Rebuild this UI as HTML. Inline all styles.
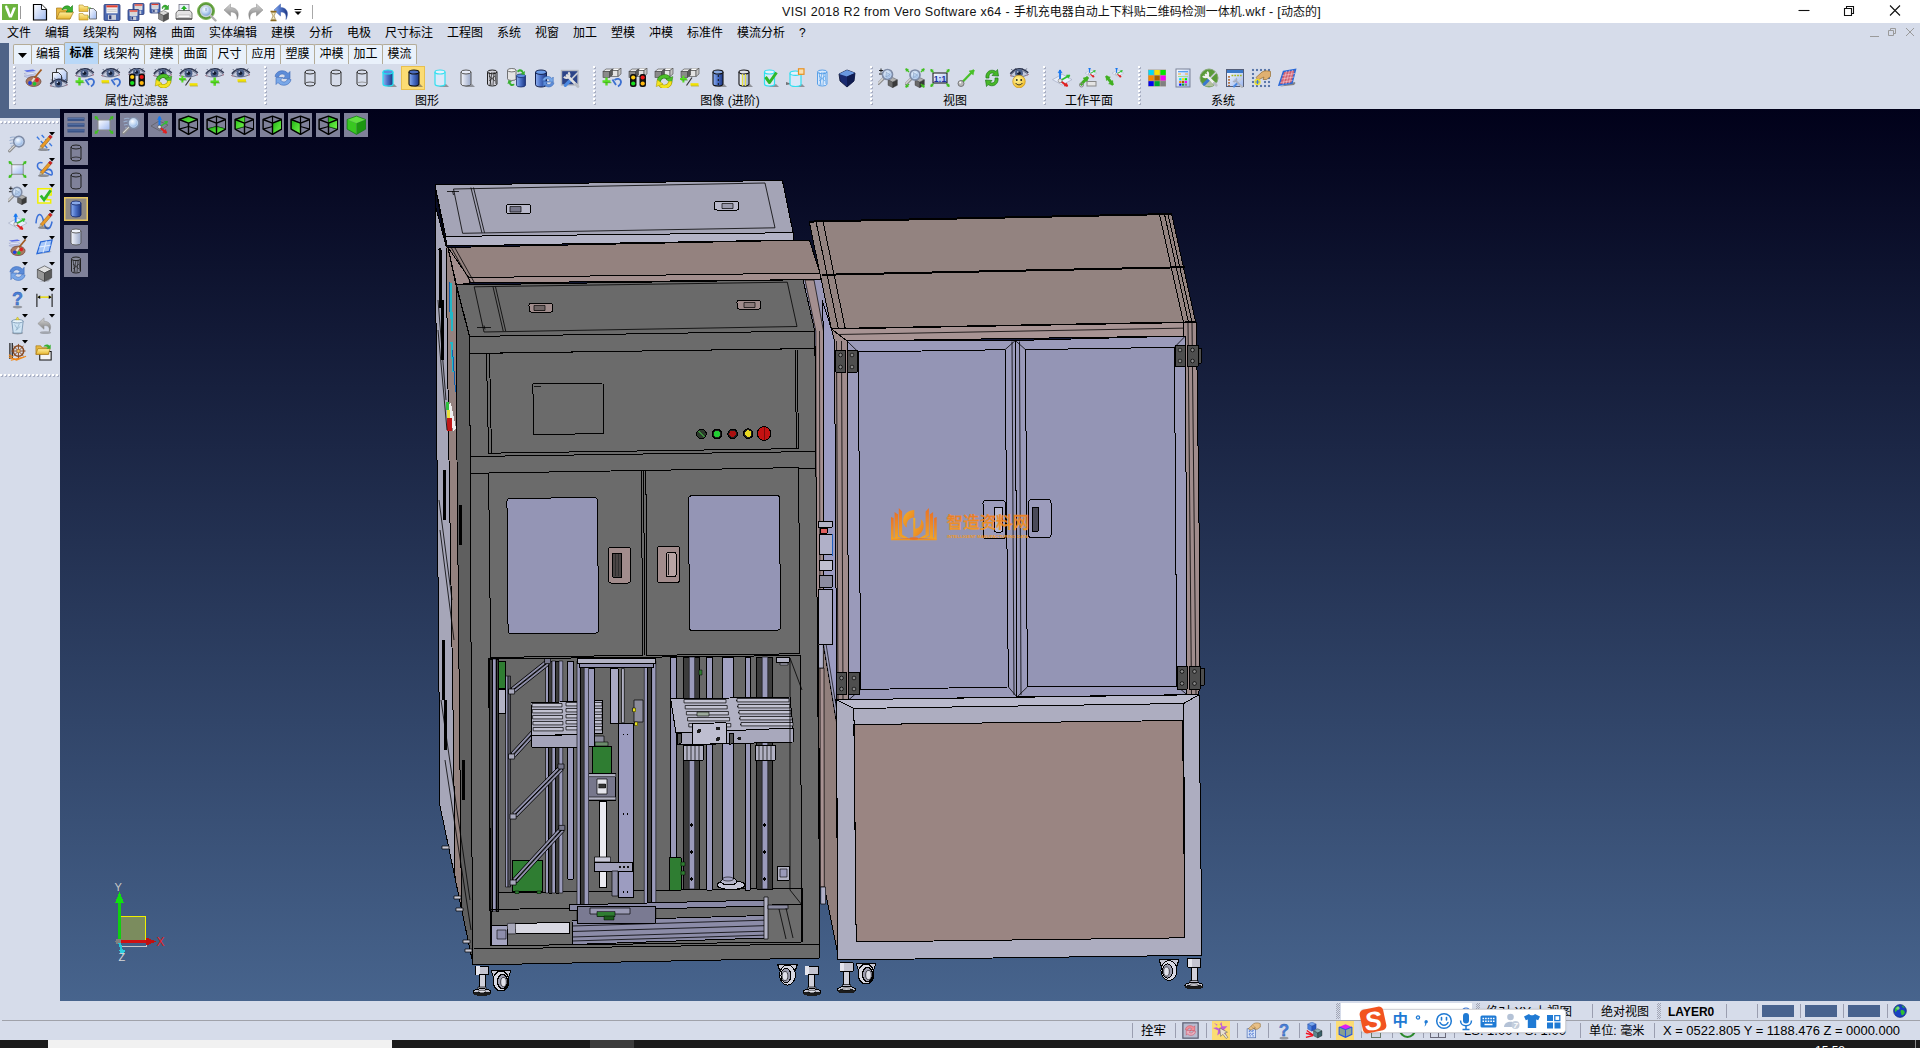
<!DOCTYPE html>
<html lang="zh-CN"><head><meta charset="utf-8"><title>VISI 2018 R2</title>
<style>
*{box-sizing:border-box;margin:0;padding:0}
html,body{width:1920px;height:1048px;overflow:hidden;background:#d6dcea}
body{position:relative;font-family:"Liberation Sans","Noto Sans CJK SC",sans-serif;font-size:12px;color:#000}
.abs{position:absolute}
#title{left:0;top:0;width:1920px;height:23px;background:#fff}
#title .t{position:absolute;left:782px;top:4px;height:16px;line-height:16px;font-size:12px;white-space:nowrap;color:#111}
#title .la{font-size:12.5px;letter-spacing:.32px}
#menu{left:0;top:23px;width:1920px;height:21px;background:#d6dcea}
#menu span{position:absolute;top:2px;height:16px;line-height:16px;font-size:12px;white-space:nowrap}
#tabs{left:0;top:43px;width:1920px;height:22px}
.tab{position:absolute;top:1px;height:21px;background:#e9f1fb;border:1px solid #b4ac98;border-bottom:none;border-radius:2px 2px 0 0;font-size:12px;line-height:18px;text-align:center;white-space:nowrap}
.tab.on{top:-1px;height:23px;background:#b9d8f8;font-weight:bold;line-height:20px}
#tb{left:9px;top:64px;width:1911px;height:45px;background:#d6dcea}
.lab{position:absolute;top:94px;height:14px;line-height:14px;font-size:12px;white-space:nowrap;transform:translateX(-50%)}
.grip{position:absolute;width:3px;background-image:linear-gradient(#fff,#fff),linear-gradient(#aab0c4,#aab0c4);background-size:2px 2px,2px 2px;background-position:0 0,1px 1px;background-repeat:repeat-y;background-size:2px 2px;}
.grip{background:none}.grip::before{content:'';position:absolute;left:1px;top:1px;width:2px;height:100%;background-image:repeating-linear-gradient(#a9afc3 0,#a9afc3 2px,transparent 2px,transparent 4px)}.grip::after{content:'';position:absolute;left:0;top:0;width:2px;height:100%;background-image:repeating-linear-gradient(#fff 0,#fff 2px,transparent 2px,transparent 4px)}
.hgrip{position:absolute;height:3px}.hgrip::before{content:'';position:absolute;left:1px;top:1px;height:2px;width:100%;background-image:repeating-linear-gradient(90deg,#a9afc3 0,#a9afc3 2px,transparent 2px,transparent 4px)}.hgrip::after{content:'';position:absolute;left:0;top:0;height:2px;width:100%;background-image:repeating-linear-gradient(90deg,#fff 0,#fff 2px,transparent 2px,transparent 4px)}
.ic{position:absolute;width:20px;height:20px}
#vp{left:60px;top:109px;width:1860px;height:892px;background:linear-gradient(#01011a 0%,#47648d 100%);overflow:hidden}
.vb{position:absolute;width:24px;height:24px;background:#7f8199}
#st{left:0;top:1001px;width:1920px;height:39px;background:#d6dcea}
#st span{position:absolute;white-space:nowrap;font-size:12.5px;line-height:16px}
#task{left:0;top:1040px;width:1920px;height:8px;background:#1b1b1b}
</style></head><body>
<div id="title" class="abs"><span class="t"><span id="t1" class="la">VISI 2018 R2 from Vero Software x64 - </span>手机充电器自动上下料贴二维码检测一体机<span class="la">.wkf - [</span>动态的<span class="la">]</span></span>
<svg class="abs" style="left:1780px;top:0" width="140" height="23" viewBox="0 0 140 23"><g stroke="#111" stroke-width="1.1" fill="none"><path d="M18.5 10.5h11"/><path d="M64.5 8.500h7v7h-7zM66.500 8.500v-2h7v7h-2"/><path d="M110 5.500l10 10M120 5.500l-10 10"/></g></svg>
</div>
<div id="menu" class="abs">
<span style="left:7px">文件</span><span style="left:45px">编辑</span><span style="left:83px">线架构</span><span style="left:133px">网格</span><span style="left:171px">曲面</span><span style="left:209px">实体编辑</span><span style="left:271px">建模</span><span style="left:309px">分析</span><span style="left:347px">电极</span><span style="left:385px">尺寸标注</span><span style="left:447px">工程图</span><span style="left:497px">系统</span><span style="left:535px">视窗</span><span style="left:573px">加工</span><span style="left:611px">塑模</span><span style="left:649px">冲模</span><span style="left:687px">标准件</span><span style="left:737px">模流分析</span><span style="left:799px">?</span>
<svg class="abs" style="left:1865px;top:2px" width="55" height="16" viewBox="0 0 55 16"><g stroke="#9a9a9a" stroke-width="1" fill="none"><path d="M5 11.500h9"/><path d="M23.500 5.500h5v5h-5zM25.500 5.500v-2h5v5h-2"/><path d="M41 3l8 8M49 3l-8 8"/></g></svg>
</div>
<div class="abs" style="left:0;top:43px;width:9px;height:66px;background:#4f6387"></div>
<div class="abs" style="left:0;top:109px;width:60px;height:9px;background:#4f6387"></div>
<div id="tabs" class="abs">
<div class="tab" style="left:13px;width:19px"><svg width="9" height="5" viewBox="0 0 9 5" style="position:absolute;left:4px;top:8px"><path d="M0 0h9L4.500 5z" fill="#000"/></svg></div>
<div class="tab" style="left:31px;width:34px">编辑</div>
<div class="tab on" style="left:64px;width:35px">标准</div>
<div class="tab" style="left:98px;width:47px">线架构</div>
<div class="tab" style="left:144px;width:35px">建模</div>
<div class="tab" style="left:178px;width:35px">曲面</div>
<div class="tab" style="left:212px;width:35px">尺寸</div>
<div class="tab" style="left:246px;width:35px">应用</div>
<div class="tab" style="left:280px;width:35px">塑膜</div>
<div class="tab" style="left:314px;width:35px">冲模</div>
<div class="tab" style="left:348px;width:35px">加工</div>
<div class="tab" style="left:382px;width:35px">模流</div>
</div>
<svg width="0" height="0" style="position:absolute;left:0;top:0"><defs><linearGradient id="gB" x1="0" x2="1"><stop offset="0" stop-color="#8fb0f0"/><stop offset=".45" stop-color="#4c72c8"/><stop offset="1" stop-color="#1c3580"/></linearGradient><linearGradient id="gW" x1="0" x2="1"><stop offset="0" stop-color="#f4f6fc"/><stop offset="1" stop-color="#9aa8c8"/></linearGradient><linearGradient id="gP" x1="0" y1="0" x2="1" y2="1"><stop offset="0" stop-color="#fff"/><stop offset="1" stop-color="#9db8f0"/></linearGradient><linearGradient id="gF" x1="0" y1="0" x2="0" y2="1"><stop offset="0" stop-color="#fff0a0"/><stop offset="1" stop-color="#e8b830"/></linearGradient><linearGradient id="gG" x1="0" y1="0" x2="0" y2="1"><stop offset="0" stop-color="#d8d8d8"/><stop offset="1" stop-color="#707070"/></linearGradient><radialGradient id="gL" cx=".4" cy=".35" r=".7"><stop offset="0" stop-color="#fafcff"/><stop offset=".45" stop-color="#c2d8f4"/><stop offset="1" stop-color="#6c96d2"/></radialGradient><radialGradient id="gY" cx=".4" cy=".35" r=".7"><stop offset="0" stop-color="#fff8a0"/><stop offset="1" stop-color="#f0b820"/></radialGradient><linearGradient id="gGr" x1="0" y1="0" x2="1" y2="1"><stop offset="0" stop-color="#1ca812"/><stop offset=".5" stop-color="#4ad830"/><stop offset="1" stop-color="#7cf050"/></linearGradient></defs></svg>
<svg class="ic" style="left:0px;top:1.5px;width:20px;height:20px" viewBox="0 0 20 20" ><rect x="2" y="2" width="16" height="16" fill="#6cb33e"/><path d="M5,5.500h3.200l2.300,7l2.600,-7h2.900l-4.200,10h-2.800z" fill="#fff"/><circle cx="6.300" cy="4.800" r="1.200" fill="#fff"/></svg>
<svg class="ic" style="left:30px;top:1.5px;width:20px;height:20px" viewBox="0 0 20 20" ><path d="M3.500,2.500h8l5,5v10.500h-13z" fill="url(#gP)" stroke="#000" stroke-width="1.200"/><path d="M11.500,2.500v5h5" fill="#fff" stroke="#000" stroke-width=".9"/></svg>
<svg class="ic" style="left:54.5px;top:1.5px;width:20px;height:20px" viewBox="0 0 20 20" ><path d="M1.500,6h5l1.500,2h7v9h-13.500z" fill="#e8b840" stroke="#a87818" stroke-width=".7"/><path d="M1.500,17l3,-7h14l-3.500,7z" fill="url(#gF)" stroke="#a87818" stroke-width=".7"/><path d="M7,8c1,-5 7,-5 8.500,-2.500l2,-2v6.500h-6.500l2,-2c-1.500,-2 -4,-1.500 -6,0z" fill="#38b030" stroke="#1c7a18" stroke-width=".6"/></svg>
<svg class="ic" style="left:78px;top:1.5px;width:20px;height:20px" viewBox="0 0 20 20" ><path d="M1,3h4l1,1.500h4v5h-9z" fill="url(#gF)" stroke="#b08820" stroke-width=".6"/><path d="M1,11.500h4l1,1.500h4v5h-9z" fill="url(#gF)" stroke="#b08820" stroke-width=".6"/><path d="M10,6h3M10,15h3M13,6v9" stroke="#58c838" stroke-width="1" fill="none"/><path d="M11.500,6.500h4l3,3v7.500h-7z" fill="url(#gP)" stroke="#555" stroke-width=".8"/></svg>
<svg class="ic" style="left:101.5px;top:1.5px;width:20px;height:20px" viewBox="0 0 20 20" ><rect x="2" y="2.5" width="16" height="16" rx="1" fill="#4a68b0" stroke="#2a3a78" stroke-width=".8"/><rect x="4.4" y="3.3" width="11.2" height="8.0" fill="#f4f4f4"/><rect x="4.4" y="3.3" width="11.2" height="2.08" fill="#e04030"/><path d="M5.2,7.3h9.6M5.2,9.219999999999999h9.6" stroke="#999" stroke-width=".5"/><rect x="6.0" y="12.74" width="8.0" height="5.12" fill="#c8ccd8"/><rect x="7.12" y="13.38" width="2.24" height="3.84" fill="#2a3a78"/></svg>
<svg class="ic" style="left:125.5px;top:1.5px;width:20px;height:20px" viewBox="0 0 20 20" ><rect x="7" y="1.5" width="11" height="11" rx="1" fill="#4a68b0" stroke="#2a3a78" stroke-width=".8"/><rect x="8.65" y="2.3" width="7.699999999999999" height="5.5" fill="#f4f4f4"/><rect x="8.65" y="2.3" width="7.699999999999999" height="1.4300000000000002" fill="#e04030"/><path d="M9.2,4.8h6.6M9.2,6.12h6.6" stroke="#999" stroke-width=".5"/><rect x="9.75" y="8.54" width="5.5" height="3.52" fill="#c8ccd8"/><rect x="10.52" y="8.98" width="1.54" height="2.6399999999999997" fill="#2a3a78"/><rect x="2" y="7.5" width="11" height="11" rx="1" fill="#4a68b0" stroke="#2a3a78" stroke-width=".8"/><rect x="3.65" y="8.3" width="7.699999999999999" height="5.5" fill="#f4f4f4"/><rect x="3.65" y="8.3" width="7.699999999999999" height="1.4300000000000002" fill="#e04030"/><path d="M4.2,10.8h6.6M4.2,12.120000000000001h6.6" stroke="#999" stroke-width=".5"/><rect x="4.75" y="14.54" width="5.5" height="3.52" fill="#c8ccd8"/><rect x="5.52" y="14.98" width="1.54" height="2.6399999999999997" fill="#2a3a78"/></svg>
<svg class="ic" style="left:149px;top:1.5px;width:20px;height:20px" viewBox="0 0 20 20" ><rect x="1" y="1" width="10" height="10" rx="1" fill="#4a68b0" stroke="#2a3a78" stroke-width=".8"/><rect x="2.5" y="1.8" width="7.0" height="5.0" fill="#f4f4f4"/><rect x="2.5" y="1.8" width="7.0" height="1.3" fill="#e04030"/><path d="M3.0,4.0h6.0M3.0,5.2h6.0" stroke="#999" stroke-width=".5"/><rect x="3.5" y="7.4" width="5.0" height="3.2" fill="#c8ccd8"/><rect x="4.2" y="7.800000000000001" width="1.4000000000000001" height="2.4" fill="#2a3a78"/><g transform="translate(9.5,8.5) scale(0.85)" stroke="#333" stroke-width=".5" stroke-linejoin="round"><path d="M0,3l6,-3l6,3l-6,3z" fill="#d8d8d8"/><path d="M0,3l6,3v7l-6,-3z" fill="#888"/><path d="M12,3l-6,3v7l6,-3z" fill="#555"/></g><path d="M13,6.500c0,-3.500 4,-4.500 5.500,-2l1,-1.500v4.500h-4.500l1.500,-1.500c-1,-1.500 -2.500,-1 -2.500,.5z" fill="#38b030" stroke="#1c7a18" stroke-width=".4"/></svg>
<svg class="ic" style="left:174px;top:1.5px;width:20px;height:20px" viewBox="0 0 20 20" ><rect x="5" y="2.500" width="10" height="8" fill="#eaf0fc" stroke="#667" stroke-width=".7"/><path d="M10,3.500l3,3.500h-2v2.500h-2v-2.500h-2z" fill="#28b028"/><path d="M2,11l2,-2.500h12l2,2.500v6h-16z" fill="#e4e4e4" stroke="#555" stroke-width=".8"/><rect x="4" y="13" width="12" height="2.500" fill="#fafafa" stroke="#888" stroke-width=".4"/><path d="M2,17h16" stroke="#444" stroke-width="1.200"/></svg>
<svg class="ic" style="left:197px;top:1.5px;width:20px;height:20px" viewBox="0 0 20 20" ><circle cx="9" cy="9" r="8.500" fill="#5a9838"/><circle cx="9" cy="9" r="8.500" fill="none" stroke="#7fb858" stroke-width="1"/><path d="M13,13l5.500,5.500" stroke="#b0b0b0" stroke-width="2.400" stroke-linecap="round"/><circle cx="9" cy="9" r="5.500" fill="url(#gL)" stroke="#c8d0d8" stroke-width="1.400"/><path d="M9,6v3" stroke="#6a8ab8" stroke-width=".8"/></svg>
<svg class="ic" style="left:221.5px;top:1.5px;width:20px;height:20px" viewBox="0 0 20 20" ><path d="M2,8l6.500,-6v3.500c7,0 9.500,6 6.500,12c0.500,-5 -1.500,-7.500 -6.500,-7.500v4z" fill="url(#gG)" stroke="#8a8a8a" stroke-width=".5"/></svg>
<svg class="ic" style="left:244.5px;top:1.5px;width:20px;height:20px" viewBox="0 0 20 20" ><path d="M18,8l-6.500,-6v3.500c-7,0 -9.500,6 -6.500,12c-0.500,-5 1.500,-7.500 6.500,-7.500v4z" fill="url(#gG)" stroke="#8a8a8a" stroke-width=".5"/></svg>
<svg class="ic" style="left:268.5px;top:1.5px;width:20px;height:20px" viewBox="0 0 20 20" ><path d="M5,8l6.500,-6v3.500c7,0 8.500,6 5.500,12c0.500,-5 -0.500,-7.500 -5.500,-7.500v4z" fill="url(#gB)" stroke="#3a5aa8" stroke-width=".5"/><path d="M1.500,9.500h6M1.500,18.500h6" stroke="#8a6a20" stroke-width="1.400"/><path d="M2.500,10.500h4l-1.500,3.500l1.500,3.500h-4l1.500,-3.500z" fill="#f0e8c0" stroke="#8a6a20" stroke-width=".6"/></svg>
<div class="abs" style="left:20px;top:6px;width:1px;height:13px;background:#9a9a9a"></div>
<svg class="abs" style="left:294px;top:8px" width="8" height="8" viewBox="0 0 8 8"><path d="M.5,1.500h7" stroke="#000" stroke-width="1"/><path d="M.5,3.500h7l-3.500,3.500z" fill="#000"/></svg>
<div class="abs" style="left:312px;top:5px;width:1px;height:14px;background:#a8a8a8"></div>
<div id="tb" class="abs"></div>
<svg class="ic" style="left:23px;top:68px;width:20px;height:20px" viewBox="0 0 20 20" ><path d="M1,2.500l9,-1l3,1.500l-9,1z" fill="#5a6ee8"/><path d="M1,5.500l9,-1l3,1.500l-9,1z" fill="#e8ecff" stroke="#8890c0" stroke-width=".4"/><path d="M1,8l9,-1l3,1.500l-9,1z" fill="#c8d0f0" stroke="#8890c0" stroke-width=".4"/><ellipse cx="10.500" cy="13.500" rx="7.500" ry="5" fill="#a87860" stroke="#6a4030" stroke-width=".7"/><circle cx="7" cy="15" r="1.900" fill="#2040e0"/><circle cx="11.500" cy="15.800" r="1.900" fill="#20c030"/><circle cx="14" cy="12" r="1.900" fill="#e02020"/><path d="M18.500,1.500l-7.500,9" stroke="#a05a20" stroke-width="1.800"/><path d="M11.500,10l-2.500,3.500" stroke="#e8e0d0" stroke-width="2"/></svg>
<svg class="ic" style="left:49px;top:68px;width:20px;height:20px" viewBox="0 0 20 20" ><path d="M7.500,.8h7l3.500,3.500v9h-10.500z" fill="url(#gP)" stroke="#222" stroke-width=".9"/><path d="M3.500,4.500h6l3,3v7h-9z" fill="url(#gP)" stroke="#222" stroke-width=".9"/><g transform="translate(0.5,10.5) scale(0.95)"><path d="M0.500,7.500Q9,-2.500 19,6.500Q10,11 0.500,7.500z" fill="#c4cadc" stroke="#59607a" stroke-width=".8"/><path d="M0.500,7.500l2,.8M19,6.500l-2,1" stroke="#c08898" stroke-width="1"/><path d="M0.800,5.800Q9,-3.800 18.800,4.800" fill="none" stroke="#2e3650" stroke-width="1.500"/><path d="M3,2.500l-1.200,-1.500M6,.8l-.6,-1.500M13,.5l.6,-1.500M16,2l1.200,-1.500" stroke="#2e3650" stroke-width=".7"/><circle cx="9.500" cy="5.200" r="3.900" fill="#4a5f88"/><circle cx="9.500" cy="5.200" r="1.800" fill="#141c30"/><circle cx="8.300" cy="4" r=".8" fill="#dfe8ff"/></g></svg>
<svg class="ic" style="left:75px;top:68px;width:20px;height:20px" viewBox="0 0 20 20" ><g transform="translate(0,0) scale(1)"><path d="M0.500,7.500Q9,-2.500 19,6.500Q10,11 0.500,7.500z" fill="#c4cadc" stroke="#59607a" stroke-width=".8"/><path d="M0.500,7.500l2,.8M19,6.500l-2,1" stroke="#c08898" stroke-width="1"/><path d="M0.800,5.800Q9,-3.800 18.800,4.800" fill="none" stroke="#2e3650" stroke-width="1.500"/><path d="M3,2.500l-1.200,-1.500M6,.8l-.6,-1.500M13,.5l.6,-1.500M16,2l1.200,-1.500" stroke="#2e3650" stroke-width=".7"/><circle cx="9.500" cy="5.200" r="3.900" fill="#4a5f88"/><circle cx="9.500" cy="5.200" r="1.800" fill="#141c30"/><circle cx="8.300" cy="4" r=".8" fill="#dfe8ff"/></g><path d="M0.5,13.5h8M4.5,9.5v8" stroke="#55dd22" stroke-width="2.4" fill="none"/><path d="M1.5,14.7h8" stroke="#3a8a18" stroke-width=".6" fill="none"/><path d="M10.5,11.5l3.500,5.500" stroke="#3b6fd0" stroke-width="1.800" fill="none"/><path d="M12.5,12.0c6,-4 9,3 3.500,6.500" stroke="#3b6fd0" stroke-width="1.800" fill="none"/></svg>
<svg class="ic" style="left:101px;top:68px;width:20px;height:20px" viewBox="0 0 20 20" ><g transform="translate(0,0) scale(1)"><path d="M0.500,7.500Q9,-2.500 19,6.500Q10,11 0.500,7.500z" fill="#c4cadc" stroke="#59607a" stroke-width=".8"/><path d="M0.500,7.500l2,.8M19,6.500l-2,1" stroke="#c08898" stroke-width="1"/><path d="M0.800,5.800Q9,-3.800 18.800,4.800" fill="none" stroke="#2e3650" stroke-width="1.500"/><path d="M3,2.500l-1.200,-1.500M6,.8l-.6,-1.500M13,.5l.6,-1.500M16,2l1.200,-1.500" stroke="#2e3650" stroke-width=".7"/><circle cx="9.500" cy="5.200" r="3.900" fill="#4a5f88"/><circle cx="9.500" cy="5.200" r="1.800" fill="#141c30"/><circle cx="8.300" cy="4" r=".8" fill="#dfe8ff"/></g><path d="M0.5,13.5h7.5" stroke="#f2e200" stroke-width="2.600" fill="none"/><path d="M1.0,15.0h7.5" stroke="#a89a00" stroke-width=".6" fill="none"/><path d="M10.5,11.5l3.500,5.500" stroke="#3b6fd0" stroke-width="1.800" fill="none"/><path d="M12.5,12.0c6,-4 9,3 3.500,6.500" stroke="#3b6fd0" stroke-width="1.800" fill="none"/></svg>
<svg class="ic" style="left:127px;top:68px;width:20px;height:20px" viewBox="0 0 20 20" ><g transform="translate(1,-0.5) scale(0.9)"><path d="M0.500,7.500Q9,-2.500 19,6.500Q10,11 0.500,7.500z" fill="#c4cadc" stroke="#59607a" stroke-width=".8"/><path d="M0.500,7.500l2,.8M19,6.500l-2,1" stroke="#c08898" stroke-width="1"/><path d="M0.800,5.800Q9,-3.800 18.800,4.800" fill="none" stroke="#2e3650" stroke-width="1.500"/><path d="M3,2.500l-1.200,-1.500M6,.8l-.6,-1.500M13,.5l.6,-1.500M16,2l1.200,-1.500" stroke="#2e3650" stroke-width=".7"/><circle cx="9.500" cy="5.200" r="3.900" fill="#4a5f88"/><circle cx="9.500" cy="5.200" r="1.800" fill="#141c30"/><circle cx="8.300" cy="4" r=".8" fill="#dfe8ff"/></g><rect x="2" y="5.5" width="6.500" height="13" rx="2.500" fill="#111"/><rect x="11.5" y="5.5" width="6.500" height="13" rx="2.500" fill="#111"/><circle cx="5.2" cy="9.0" r="2.100" fill="#ffcc10"/><circle cx="5.2" cy="15.0" r="2.100" fill="#18e020"/><circle cx="14.7" cy="9.0" r="2.100" fill="#f01818"/><circle cx="14.7" cy="15.0" r="2.100" fill="#ffb810"/></svg>
<svg class="ic" style="left:153px;top:68px;width:20px;height:20px" viewBox="0 0 20 20" ><g transform="translate(0,0) scale(1)"><path d="M0.500,7.500Q9,-2.500 19,6.500Q10,11 0.500,7.500z" fill="#c4cadc" stroke="#59607a" stroke-width=".8"/><path d="M0.500,7.500l2,.8M19,6.500l-2,1" stroke="#c08898" stroke-width="1"/><path d="M0.800,5.800Q9,-3.800 18.800,4.800" fill="none" stroke="#2e3650" stroke-width="1.500"/><path d="M3,2.500l-1.200,-1.500M6,.8l-.6,-1.500M13,.5l.6,-1.500M16,2l1.200,-1.500" stroke="#2e3650" stroke-width=".7"/><circle cx="9.500" cy="5.200" r="3.900" fill="#4a5f88"/><circle cx="9.500" cy="5.200" r="1.800" fill="#141c30"/><circle cx="8.300" cy="4" r=".8" fill="#dfe8ff"/></g><g transform="translate(2.5,6) scale(1.05)" fill="none"><path d="M2.200,7A5.300,5 0 0 1 12,4.200" stroke="#2c7a14" stroke-width="3.800"/><path d="M2.200,7A5.300,5 0 0 1 12,4.200" stroke="#4cc028" stroke-width="2.800"/><path d="M9,4.500l6.500,-2.500l-1,6.500z" fill="#4cc028" stroke="#2c7a14" stroke-width=".5"/><path d="M13,6.500A5.300,5 0 0 1 3.200,9.300" stroke="#a89800" stroke-width="3.800"/><path d="M13,6.500A5.300,5 0 0 1 3.200,9.300" stroke="#f4e420" stroke-width="2.800"/><path d="M6.200,9l-6.500,2.500l1,-6.500z" fill="#f4e420" stroke="#a89800" stroke-width=".5"/></g></svg>
<svg class="ic" style="left:179px;top:68px;width:20px;height:20px" viewBox="0 0 20 20" ><g transform="translate(0,0) scale(1)"><path d="M0.500,7.500Q9,-2.500 19,6.500Q10,11 0.500,7.500z" fill="#c4cadc" stroke="#59607a" stroke-width=".8"/><path d="M0.500,7.500l2,.8M19,6.500l-2,1" stroke="#c08898" stroke-width="1"/><path d="M0.800,5.800Q9,-3.800 18.800,4.800" fill="none" stroke="#2e3650" stroke-width="1.500"/><path d="M3,2.500l-1.200,-1.500M6,.8l-.6,-1.500M13,.5l.6,-1.500M16,2l1.200,-1.500" stroke="#2e3650" stroke-width=".7"/><circle cx="9.500" cy="5.200" r="3.900" fill="#4a5f88"/><circle cx="9.500" cy="5.200" r="1.800" fill="#141c30"/><circle cx="8.300" cy="4" r=".8" fill="#dfe8ff"/></g><path d="M0,11.05h6.8M3.4,7.65v6.8" stroke="#55dd22" stroke-width="2.04" fill="none"/><path d="M1,12.07h6.8" stroke="#3a8a18" stroke-width=".6" fill="none"/><path d="M12,9.500l-5.500,8" stroke="#333" stroke-width="1.100"/><path d="M10.5,16.5h8" stroke="#f2e200" stroke-width="2.600" fill="none"/><path d="M11.0,18.0h8" stroke="#a89a00" stroke-width=".6" fill="none"/></svg>
<svg class="ic" style="left:205px;top:68px;width:20px;height:20px" viewBox="0 0 20 20" ><g transform="translate(0,0) scale(1)"><path d="M0.500,7.500Q9,-2.500 19,6.500Q10,11 0.500,7.500z" fill="#c4cadc" stroke="#59607a" stroke-width=".8"/><path d="M0.500,7.500l2,.8M19,6.500l-2,1" stroke="#c08898" stroke-width="1"/><path d="M0.800,5.800Q9,-3.800 18.800,4.800" fill="none" stroke="#2e3650" stroke-width="1.500"/><path d="M3,2.500l-1.200,-1.500M6,.8l-.6,-1.500M13,.5l.6,-1.500M16,2l1.200,-1.500" stroke="#2e3650" stroke-width=".7"/><circle cx="9.500" cy="5.200" r="3.900" fill="#4a5f88"/><circle cx="9.500" cy="5.200" r="1.800" fill="#141c30"/><circle cx="8.300" cy="4" r=".8" fill="#dfe8ff"/></g><path d="M5.5,13.65h8.4M9.7,9.45v8.4" stroke="#55dd22" stroke-width="2.52" fill="none"/><path d="M6.5,14.91h8.4" stroke="#3a8a18" stroke-width=".6" fill="none"/></svg>
<svg class="ic" style="left:231px;top:68px;width:20px;height:20px" viewBox="0 0 20 20" ><g transform="translate(0,0) scale(1)"><path d="M0.500,7.500Q9,-2.500 19,6.500Q10,11 0.500,7.500z" fill="#c4cadc" stroke="#59607a" stroke-width=".8"/><path d="M0.500,7.500l2,.8M19,6.500l-2,1" stroke="#c08898" stroke-width="1"/><path d="M0.800,5.800Q9,-3.800 18.800,4.800" fill="none" stroke="#2e3650" stroke-width="1.500"/><path d="M3,2.500l-1.200,-1.500M6,.8l-.6,-1.500M13,.5l.6,-1.500M16,2l1.200,-1.500" stroke="#2e3650" stroke-width=".7"/><circle cx="9.500" cy="5.200" r="3.900" fill="#4a5f88"/><circle cx="9.500" cy="5.200" r="1.800" fill="#141c30"/><circle cx="8.300" cy="4" r=".8" fill="#dfe8ff"/></g><path d="M6.5,12.5h8.5" stroke="#f2e200" stroke-width="2.600" fill="none"/><path d="M7.0,14.0h8.5" stroke="#a89a00" stroke-width=".6" fill="none"/></svg>
<div class="abs" style="left:401px;top:66px;width:24px;height:24px;background:#fbdc74;border:1px solid #e8c050"></div>
<svg class="ic" style="left:273px;top:68px;width:20px;height:20px" viewBox="0 0 20 20" ><path d="M2,8.500C3,2 12,1 15,5.500l2,-2v7h-7l2.500,-2.500C10.500,5 6.500,5.500 5.500,9z" fill="#5c8cd8" stroke="#3a68b8" stroke-width=".6"/><path d="M18,11.500C17,18 8,19 5,14.500l-2,2v-7h7l-2.500,2.500C9.500,15 13.500,14.500 14.500,11z" fill="#7aa8e8" stroke="#3a68b8" stroke-width=".6"/></svg>
<svg class="ic" style="left:300px;top:68px;width:20px;height:20px" viewBox="0 0 20 20" ><path d="M5,4.0v12.0a5.0,2.0 0 0 0 10,0v-12.0" fill="none" stroke="#333" stroke-width="1"/><ellipse cx="10.0" cy="4.0" rx="5.0" ry="2.0" fill="none" stroke="#333" stroke-width="1"/><path d="M5,16a5,2 0 0 1 10,0" fill="none" stroke="#333" stroke-width=".8"/></svg>
<svg class="ic" style="left:326px;top:68px;width:20px;height:20px" viewBox="0 0 20 20" ><path d="M5,4.0v12.0a5.0,2.0 0 0 0 10,0v-12.0" fill="none" stroke="#333" stroke-width="1"/><ellipse cx="10.0" cy="4.0" rx="5.0" ry="2.0" fill="none" stroke="#333" stroke-width="1"/></svg>
<svg class="ic" style="left:352px;top:68px;width:20px;height:20px" viewBox="0 0 20 20" ><path d="M5,4.0v12.0a5.0,2.0 0 0 0 10,0v-12.0" fill="none" stroke="#333" stroke-width="1"/><ellipse cx="10.0" cy="4.0" rx="5.0" ry="2.0" fill="none" stroke="#333" stroke-width="1"/><path d="M5,16a5,2 0 0 1 10,0" fill="none" stroke="#888" stroke-width=".8"/></svg>
<svg class="ic" style="left:378px;top:68px;width:20px;height:20px" viewBox="0 0 20 20" ><path d="M8,19l11,0l-3,-3z" fill="#555" opacity=".55"/><path d="M5,4.0v12.0a5.0,2.0 0 0 0 10,0v-12.0" fill="url(#gB)" stroke="#20e0f0" stroke-width="1.2"/><ellipse cx="10.0" cy="4.0" rx="5.0" ry="2.0" fill="#5c8ce0" stroke="#20e0f0" stroke-width="1.2"/></svg>
<svg class="ic" style="left:404px;top:68px;width:20px;height:20px" viewBox="0 0 20 20" ><path d="M8,19l11,0l-3,-3z" fill="#555" opacity=".55"/><path d="M5,4.0v12.0a5.0,2.0 0 0 0 10,0v-12.0" fill="url(#gB)" stroke="#111" stroke-width="1.1"/><ellipse cx="10.0" cy="4.0" rx="5.0" ry="2.0" fill="#4a6cc0" stroke="#111" stroke-width="1.1"/></svg>
<svg class="ic" style="left:430px;top:68px;width:20px;height:20px" viewBox="0 0 20 20" ><path d="M8,19l11,0l-3,-3z" fill="#555" opacity=".55"/><path d="M5,4.0v12.0a5.0,2.0 0 0 0 10,0v-12.0" fill="#dce8f8" stroke="#30e0f0" stroke-width="1.2"/><ellipse cx="10.0" cy="4.0" rx="5.0" ry="2.0" fill="#e8f0fc" stroke="#30e0f0" stroke-width="1.2"/></svg>
<svg class="ic" style="left:456px;top:68px;width:20px;height:20px" viewBox="0 0 20 20" ><path d="M8,19l11,0l-3,-3z" fill="#555" opacity=".55"/><path d="M5,4.0v12.0a5.0,2.0 0 0 0 10,0v-12.0" fill="url(#gW)" stroke="#555" stroke-width="1"/><ellipse cx="10.0" cy="4.0" rx="5.0" ry="2.0" fill="#e8ecf8" stroke="#555" stroke-width="1"/></svg>
<svg class="ic" style="left:482px;top:68px;width:20px;height:20px" viewBox="0 0 20 20" ><path d="M5.5,3.9000000000000004v12.2a4.75,1.9000000000000001 0 0 0 9.5,0v-12.2" fill="#d0d0d8" stroke="#222" stroke-width="1"/><ellipse cx="10.25" cy="3.9000000000000004" rx="4.75" ry="1.9000000000000001" fill="#d0d0d8" stroke="#222" stroke-width="1"/><path d="M7,4l2,13M10,4l-2,13M12,4l-1,13M13,4l1,12M7,8l6,5M13,8l-6,5" stroke="#222" stroke-width=".7" fill="none"/></svg>
<svg class="ic" style="left:507px;top:68px;width:20px;height:20px" viewBox="0 0 20 20" ><path d="M0.5,2.2v8.6a4.25,1.7000000000000002 0 0 0 8.5,0v-8.6" fill="#e4e4e4" stroke="#555" stroke-width="0.8"/><ellipse cx="4.75" cy="2.2" rx="4.25" ry="1.7000000000000002" fill="#f4f4f4" stroke="#555" stroke-width="0.8"/><path d="M9.5,7.8v9.4a4.5,1.8 0 0 0 9,0v-9.4" fill="url(#gB)" stroke="#1c3070" stroke-width="0.8"/><ellipse cx="14.0" cy="7.8" rx="4.5" ry="1.8" fill="#5c8ce0" stroke="#1c3070" stroke-width="0.8"/><path d="M10,3c2,-3 6,-2 6.500,1l1.500,-1l-.5,4l-4,-1l1.500,-1c-.5,-1.500 -2.500,-2 -4,-.5z" fill="#38b030"/><path d="M7.500,17c-2,2 -5,1 -5.500,-1.500l-1.500,.5l1,-4l3.500,1.500l-1.500,1c.5,1.500 2,2 3.500,1z" fill="#38b030"/></svg>
<svg class="ic" style="left:534.5px;top:68px;width:20px;height:20px" viewBox="0 0 20 20" ><path d="M0.5,4.2v12.6a5.5,2.2 0 0 0 11,0v-12.6" fill="url(#gB)" stroke="#14204c" stroke-width="1"/><ellipse cx="6.0" cy="4.2" rx="5.5" ry="2.2" fill="#6c9ce8" stroke="#14204c" stroke-width="1"/><g transform="translate(6,6.500) scale(.72)"><path d="M2,8.500C3,2 12,1 15,5.500l2,-2v7h-7l2.500,-2.500C10.500,5 6.500,5.500 5.500,9z" fill="#78a8e8" stroke="#3a68b8" stroke-width=".8"/><path d="M18,11.500C17,18 8,19 5,14.500l-2,2v-7h7l-2.500,2.500C9.500,15 13.500,14.500 14.500,11z" fill="#5c8cd8" stroke="#3a68b8" stroke-width=".8"/></g></svg>
<svg class="ic" style="left:559.5px;top:68px;width:20px;height:20px" viewBox="0 0 20 20" ><rect x="1.500" y="2.500" width="16.500" height="14.500" fill="#2c4488" stroke="#b4b8c0" stroke-width="1.400"/><g transform="translate(3,3.5) scale(1.15)" stroke-linecap="round" fill="none"><path d="M12.500,1.500l-6,6" stroke="#c8ccd4" stroke-width="1.500"/><path d="M6.500,7.500l-4.500,4.500" stroke="#4a88e0" stroke-width="2.800"/><path d="M3.500,3.500l9,9" stroke="#e0e0e0" stroke-width="2.300"/><path d="M0.800,4.600A2.700,2.700 0 1 0 4.600,0.800" stroke="#e0e0e0" stroke-width="1.900" stroke-linecap="butt"/><path d="M11,11l2,2" stroke="#b8bcc4" stroke-width="2.400"/></g></svg>
<svg class="ic" style="left:601.6px;top:68px;width:20px;height:20px" viewBox="0 0 20 20" ><path d="M9.5,2.5l3,-2.500h6.500l-3,2.500z" fill="#fafafa" stroke="#444" stroke-width=".6"/><rect x="9.5" y="2.5" width="6.500" height="6" fill="#e4e4e4" stroke="#444" stroke-width=".6"/><path d="M16.0,2.5l3,-2.500v6l-3,2.500z" fill="#c4c4c4" stroke="#444" stroke-width=".6"/><path d="M1,3.5l3,-2.500h6.500l-3,2.500z" fill="#e8e8e8" stroke="#444" stroke-width=".6"/><rect x="1" y="3.5" width="6.500" height="6" fill="#8a8a8a" stroke="#444" stroke-width=".6"/><path d="M7.5,3.5l3,-2.500v6l-3,2.500z" fill="#5a5a5a" stroke="#444" stroke-width=".6"/><path d="M0.5,13.5h8M4.5,9.5v8" stroke="#55dd22" stroke-width="2.4" fill="none"/><path d="M1.5,14.7h8" stroke="#3a8a18" stroke-width=".6" fill="none"/><path d="M10.5,11.5l3.500,5.500" stroke="#3b6fd0" stroke-width="1.800" fill="none"/><path d="M12.5,12.0c6,-4 9,3 3.500,6.500" stroke="#3b6fd0" stroke-width="1.800" fill="none"/></svg>
<svg class="ic" style="left:627.8px;top:68px;width:20px;height:20px" viewBox="0 0 20 20" ><path d="M9.5,2.5l3,-2.500h6.500l-3,2.500z" fill="#fafafa" stroke="#444" stroke-width=".6"/><rect x="9.5" y="2.5" width="6.500" height="6" fill="#e4e4e4" stroke="#444" stroke-width=".6"/><path d="M16.0,2.5l3,-2.500v6l-3,2.500z" fill="#c4c4c4" stroke="#444" stroke-width=".6"/><path d="M1,3.5l3,-2.500h6.500l-3,2.500z" fill="#e8e8e8" stroke="#444" stroke-width=".6"/><rect x="1" y="3.5" width="6.500" height="6" fill="#8a8a8a" stroke="#444" stroke-width=".6"/><path d="M7.5,3.5l3,-2.500v6l-3,2.500z" fill="#5a5a5a" stroke="#444" stroke-width=".6"/><rect x="2" y="6" width="6.500" height="13" rx="2.500" fill="#111"/><rect x="11.5" y="6" width="6.500" height="13" rx="2.500" fill="#111"/><circle cx="5.2" cy="9.5" r="2.100" fill="#ffcc10"/><circle cx="5.2" cy="15.5" r="2.100" fill="#18e020"/><circle cx="14.7" cy="9.5" r="2.100" fill="#f01818"/><circle cx="14.7" cy="15.5" r="2.100" fill="#ffb810"/></svg>
<svg class="ic" style="left:654px;top:68px;width:20px;height:20px" viewBox="0 0 20 20" ><path d="M9.5,2.5l3,-2.500h6.500l-3,2.500z" fill="#fafafa" stroke="#444" stroke-width=".6"/><rect x="9.5" y="2.5" width="6.500" height="6" fill="#e4e4e4" stroke="#444" stroke-width=".6"/><path d="M16.0,2.5l3,-2.500v6l-3,2.500z" fill="#c4c4c4" stroke="#444" stroke-width=".6"/><path d="M1,3.5l3,-2.500h6.500l-3,2.500z" fill="#e8e8e8" stroke="#444" stroke-width=".6"/><rect x="1" y="3.5" width="6.500" height="6" fill="#8a8a8a" stroke="#444" stroke-width=".6"/><path d="M7.5,3.5l3,-2.500v6l-3,2.500z" fill="#5a5a5a" stroke="#444" stroke-width=".6"/><g transform="translate(2.5,6.5) scale(1.05)" fill="none"><path d="M2.200,7A5.300,5 0 0 1 12,4.200" stroke="#2c7a14" stroke-width="3.800"/><path d="M2.200,7A5.300,5 0 0 1 12,4.200" stroke="#4cc028" stroke-width="2.800"/><path d="M9,4.500l6.500,-2.500l-1,6.500z" fill="#4cc028" stroke="#2c7a14" stroke-width=".5"/><path d="M13,6.500A5.300,5 0 0 1 3.200,9.300" stroke="#a89800" stroke-width="3.800"/><path d="M13,6.500A5.300,5 0 0 1 3.200,9.300" stroke="#f4e420" stroke-width="2.800"/><path d="M6.200,9l-6.500,2.500l1,-6.500z" fill="#f4e420" stroke="#a89800" stroke-width=".5"/></g></svg>
<svg class="ic" style="left:679.8px;top:68px;width:20px;height:20px" viewBox="0 0 20 20" ><path d="M9.5,2.5l3,-2.500h6.500l-3,2.500z" fill="#fafafa" stroke="#444" stroke-width=".6"/><rect x="9.5" y="2.5" width="6.500" height="6" fill="#e4e4e4" stroke="#444" stroke-width=".6"/><path d="M16.0,2.5l3,-2.500v6l-3,2.500z" fill="#c4c4c4" stroke="#444" stroke-width=".6"/><path d="M1,3.5l3,-2.500h6.500l-3,2.500z" fill="#e8e8e8" stroke="#444" stroke-width=".6"/><rect x="1" y="3.5" width="6.500" height="6" fill="#8a8a8a" stroke="#444" stroke-width=".6"/><path d="M7.5,3.5l3,-2.500v6l-3,2.500z" fill="#5a5a5a" stroke="#444" stroke-width=".6"/><path d="M0,11.05h6.8M3.4,7.65v6.8" stroke="#55dd22" stroke-width="2.04" fill="none"/><path d="M1,12.07h6.8" stroke="#3a8a18" stroke-width=".6" fill="none"/><path d="M12,9.500l-5.500,8" stroke="#333" stroke-width="1.100"/><path d="M10.5,16.5h8" stroke="#f2e200" stroke-width="2.600" fill="none"/><path d="M11.0,18.0h8" stroke="#a89a00" stroke-width=".6" fill="none"/></svg>
<svg class="ic" style="left:707.6px;top:68px;width:20px;height:20px" viewBox="0 0 20 20" ><path d="M8,19l11,0l-3,-3z" fill="#555" opacity=".55"/><path d="M5,4.0v12.0a5.0,2.0 0 0 0 10,0v-12.0" fill="url(#gB)" stroke="#111" stroke-width="1.1"/><ellipse cx="10.0" cy="4.0" rx="5.0" ry="2.0" fill="#88a8e0" stroke="#111" stroke-width="1.1"/><path d="M10.300,7v2M10.300,11v2M10.300,15v2" stroke="#111" stroke-width="1"/></svg>
<svg class="ic" style="left:733.8px;top:68px;width:20px;height:20px" viewBox="0 0 20 20" ><path d="M8,19l11,0l-3,-3z" fill="#555" opacity=".55"/><path d="M5,4.0v12.0a5.0,2.0 0 0 0 10,0v-12.0" fill="url(#gW)" stroke="#111" stroke-width="1.1"/><ellipse cx="10.0" cy="4.0" rx="5.0" ry="2.0" fill="#e0e0e8" stroke="#111" stroke-width="1.1"/><path d="M8.500,6v12M11.500,6v12" stroke="#e8e040" stroke-width="1.200"/></svg>
<svg class="ic" style="left:760px;top:68px;width:20px;height:20px" viewBox="0 0 20 20" ><path d="M8,19l11,0l-3,-3z" fill="#555" opacity=".55"/><path d="M4.5,4.0v12.0a5.0,2.0 0 0 0 10,0v-12.0" fill="#dce8f8" stroke="#30e0f0" stroke-width="1.2"/><ellipse cx="9.5" cy="4.0" rx="5.0" ry="2.0" fill="#e8f0fc" stroke="#30e0f0" stroke-width="1.2"/><path d="M5.500,9l4,5.500l7,-10" stroke="#30b828" stroke-width="3" fill="none" stroke-linejoin="round"/></svg>
<svg class="ic" style="left:785.8px;top:68px;width:20px;height:20px" viewBox="0 0 20 20" ><path d="M0,14l6,2l-6,1z" fill="#444" opacity=".7"/><path d="M9,19l10,0l-3,-3z" fill="#555" opacity=".55"/><path d="M4,5.2v11.1a5.5,2.2 0 0 0 11,0v-11.1" fill="#dce8f8" stroke="#30e0f0" stroke-width="1.2"/><ellipse cx="9.5" cy="5.2" rx="5.5" ry="2.2" fill="#e8f0fc" stroke="#30e0f0" stroke-width="1.2"/><rect x="12.500" y=".8" width="5.500" height="5.500" fill="#f8e0b0" stroke="#e89020" stroke-width="1.200"/></svg>
<svg class="ic" style="left:811.6px;top:68px;width:20px;height:20px" viewBox="0 0 20 20" ><path d="M5.5,3.9000000000000004v12.2a4.75,1.9000000000000001 0 0 0 9.5,0v-12.2" fill="#d8e8fc" stroke="#58a0e8" stroke-width="1"/><ellipse cx="10.25" cy="3.9000000000000004" rx="4.75" ry="1.9000000000000001" fill="#d8e8fc" stroke="#58a0e8" stroke-width="1"/><path d="M7,4l2,13M10,4l-2,13M12,4l-1,13M13,4l1,12M7,8l6,5M13,8l-6,5" stroke="#58a0e8" stroke-width=".7" fill="none"/></svg>
<svg class="ic" style="left:837px;top:68px;width:20px;height:20px" viewBox="0 0 20 20" ><path d="M2,6l8,-4l8,3l-1,8l-7,6l-7,-6z" fill="#1a2a70" stroke="#0a1030" stroke-width=".8"/><path d="M2,6l8,-4l8,3l-8,3.500z" fill="#6a98e0"/><path d="M10,8.500l8,-3.500l-1,8l-7,6z" fill="#101c50"/></svg>
<svg class="ic" style="left:878.3px;top:68px;width:20px;height:20px" viewBox="0 0 20 20" ><path d="M1,2.500h4M3,.5v4M1,6h4" stroke="#111" stroke-width=".9"/><g transform="translate(10,9.5) scale(0.78)" stroke="#333" stroke-width=".5" stroke-linejoin="round"><path d="M0,3l6,-3l6,3l-6,3z" fill="#b0b0b0"/><path d="M0,3l6,3v7l-6,-3z" fill="#6a6a6a"/><path d="M12,3l-6,3v7l6,-3z" fill="#3a3a3a"/></g><path d="M6.0,10.0l-5.5,5.5" stroke="#8c8c8c" stroke-width="3" stroke-linecap="round"/><path d="M6.0,9.5l-5.5,5.5" stroke="#d8d8d8" stroke-width="1.200" stroke-linecap="round"/><circle cx="9.5" cy="6.5" r="5" fill="url(#gL)" stroke="#7f8ca6" stroke-width="1.700"/><circle cx="9.5" cy="6.5" r="3.7" fill="none" stroke="#c8d8ee" stroke-width=".8"/><path d="M8,4l4,2.500l-4,2.500z" fill="#b8d0ec" stroke="#7a92b8" stroke-width=".5"/></svg>
<svg class="ic" style="left:904.5px;top:68px;width:20px;height:20px" viewBox="0 0 20 20" ><g transform="translate(10,9.5) scale(0.78)" stroke="#333" stroke-width=".5" stroke-linejoin="round"><path d="M0,3l6,-3l6,3l-6,3z" fill="#b0b0b0"/><path d="M0,3l6,3v7l-6,-3z" fill="#6a6a6a"/><path d="M12,3l-6,3v7l6,-3z" fill="#3a3a3a"/></g><path d="M6.5,10.5l-5.5,5.5" stroke="#8c8c8c" stroke-width="3" stroke-linecap="round"/><path d="M6.5,10.0l-5.5,5.5" stroke="#d8d8d8" stroke-width="1.200" stroke-linecap="round"/><circle cx="10" cy="7" r="5" fill="url(#gL)" stroke="#7f8ca6" stroke-width="1.700"/><circle cx="10" cy="7" r="3.7" fill="none" stroke="#c8d8ee" stroke-width=".8"/><path d="M8.500,4.500l4,2.500l-4,2.500z" fill="#b8d0ec" stroke="#7a92b8" stroke-width=".5"/><path d="M4,4L0.8,0.8" stroke="#40c020" stroke-width="1.5"/><path d="M0.8,0.8L3.4,1.3L1.3,3.4z" fill="#40c020" stroke="#40c020" stroke-width=".6"/><path d="M16,4L19.2,0.8" stroke="#40c020" stroke-width="1.5"/><path d="M19.2,0.8L18.7,3.4L16.6,1.3z" fill="#40c020" stroke="#40c020" stroke-width=".6"/><path d="M4,16L0.8,19.2" stroke="#40c020" stroke-width="1.5"/><path d="M0.8,19.2L1.3,16.6L3.4,18.7z" fill="#40c020" stroke="#40c020" stroke-width=".6"/><path d="M16,16L19.2,19.2" stroke="#40c020" stroke-width="1.5"/><path d="M19.2,19.2L16.6,18.7L18.7,16.6z" fill="#40c020" stroke="#40c020" stroke-width=".6"/></svg>
<svg class="ic" style="left:930.3px;top:68px;width:20px;height:20px" viewBox="0 0 20 20" ><rect x="3" y="5" width="14" height="10" fill="url(#gP)" stroke="#111" stroke-width="1"/><text x="10" y="13.500" font-size="8.500" font-weight="bold" text-anchor="middle" fill="#2030a0" font-family="Liberation Sans,sans-serif">1:1</text><path d="M3.5,4.5L0.8,1.5" stroke="#40c020" stroke-width="1.5"/><path d="M0.8,1.5L3.3,2.1L1.1,4.1z" fill="#40c020" stroke="#40c020" stroke-width=".6"/><path d="M16.5,4.5L19.2,1.5" stroke="#40c020" stroke-width="1.5"/><path d="M19.2,1.5L18.9,4.1L16.7,2.1z" fill="#40c020" stroke="#40c020" stroke-width=".6"/><path d="M3.5,15.5L0.8,18.5" stroke="#40c020" stroke-width="1.5"/><path d="M0.8,18.5L1.1,15.9L3.3,17.9z" fill="#40c020" stroke="#40c020" stroke-width=".6"/><path d="M16.5,15.5L19.2,18.5" stroke="#40c020" stroke-width="1.5"/><path d="M19.2,18.5L16.7,17.9L18.9,15.9z" fill="#40c020" stroke="#40c020" stroke-width=".6"/></svg>
<svg class="ic" style="left:956.5px;top:68px;width:20px;height:20px" viewBox="0 0 20 20" ><path d="M4,15.5L17,2" stroke="#48c028" stroke-width="2.2"/><path d="M17,2L16.2,6.9L12.1,3.0z" fill="#48c028" stroke="#48c028" stroke-width=".6"/><circle cx="4" cy="15.500" r="3" fill="#b8b8b8" stroke="#555" stroke-width=".7"/><circle cx="3.200" cy="14.600" r="1" fill="#fff"/></svg>
<svg class="ic" style="left:982.3px;top:68px;width:20px;height:20px" viewBox="0 0 20 20" ><path d="M4,10C3,4 9,0 14,3.500l1.500,-2l1,6.500l-6.500,-.5l2,-2C9,4 6.500,6 7,10z" fill="#48b828" stroke="#1c7a18" stroke-width=".7"/><path d="M16,10C17,16 11,20 6,16.500l-1.500,2l-1,-6.500l6.500,.5l-2,2C11,16 13.500,14 13,10z" fill="#48b828" stroke="#1c7a18" stroke-width=".7"/></svg>
<svg class="ic" style="left:1008.5px;top:68px;width:20px;height:20px" viewBox="0 0 20 20" ><g transform="translate(0.5,0) scale(1)"><path d="M0.500,7.500Q9,-2.500 19,6.500Q10,11 0.500,7.500z" fill="#c4cadc" stroke="#59607a" stroke-width=".8"/><path d="M0.500,7.500l2,.8M19,6.500l-2,1" stroke="#c08898" stroke-width="1"/><path d="M0.800,5.800Q9,-3.800 18.800,4.800" fill="none" stroke="#2e3650" stroke-width="1.500"/><path d="M3,2.500l-1.200,-1.500M6,.8l-.6,-1.500M13,.5l.6,-1.500M16,2l1.200,-1.500" stroke="#2e3650" stroke-width=".7"/><circle cx="9.500" cy="5.200" r="3.900" fill="#4a5f88"/><circle cx="9.500" cy="5.200" r="1.800" fill="#141c30"/><circle cx="8.300" cy="4" r=".8" fill="#dfe8ff"/></g><circle cx="10" cy="13.500" r="6.300" fill="url(#gY)" stroke="#c89010" stroke-width=".6"/><circle cx="7.800" cy="12" r=".9" fill="#222"/><circle cx="12.200" cy="12" r=".9" fill="#222"/><path d="M6.500,15c2,2.500 5,2.500 7,0" fill="none" stroke="#222" stroke-width=".9"/></svg>
<svg class="ic" style="left:1051.7px;top:68px;width:20px;height:20px" viewBox="0 0 20 20" ><g transform="translate(0.5,3) scale(1.08)"><path d="M0,8l9,-5l9,5l-9,5z" fill="#e8eefc" stroke="#a0a8c0" stroke-width=".6"/><path d="M7,9L7,-1" stroke="#1878f0" stroke-width="1.8"/><path d="M7,-1L8.8,1.6L5.2,1.6z" fill="#1878f0" stroke="#1878f0" stroke-width=".6"/><path d="M7,9L16,4" stroke="#30c030" stroke-width="1.6"/><path d="M16,4L14.7,6.7L13.0,3.7z" fill="#30c030" stroke="#30c030" stroke-width=".6"/><path d="M7,9L14,14" stroke="#e02020" stroke-width="1.8"/><path d="M14,14L10.8,13.9L12.9,11.0z" fill="#e02020" stroke="#e02020" stroke-width=".6"/><circle cx="7" cy="9" r="1.800" fill="#e8e8e8" stroke="#666" stroke-width=".5"/></g></svg>
<svg class="ic" style="left:1077.9px;top:68px;width:20px;height:20px" viewBox="0 0 20 20" ><g transform="translate(7,0) scale(0.65)"><path d="M0,8l9,-5l9,5l-9,5z" fill="#e8eefc" stroke="#a0a8c0" stroke-width=".6"/><path d="M7,9L7,-1" stroke="#1878f0" stroke-width="1.8"/><path d="M7,-1L8.8,1.6L5.2,1.6z" fill="#1878f0" stroke="#1878f0" stroke-width=".6"/><path d="M7,9L16,4" stroke="#30c030" stroke-width="1.6"/><path d="M16,4L14.7,6.7L13.0,3.7z" fill="#30c030" stroke="#30c030" stroke-width=".6"/><path d="M7,9L14,14" stroke="#e02020" stroke-width="1.8"/><path d="M14,14L10.8,13.9L12.9,11.0z" fill="#e02020" stroke="#e02020" stroke-width=".6"/><circle cx="7" cy="9" r="1.800" fill="#e8e8e8" stroke="#666" stroke-width=".5"/></g><path d="M2.5,17L10,9" stroke="#40b020" stroke-width="3"/><path d="M10,9L9.2,13.9L5.1,10.1z" fill="#40b020" stroke="#40b020" stroke-width=".6"/><rect x="9" y="13.500" width="9" height="4.500" fill="#e4e4e4" stroke="#888" stroke-width="1"/><circle cx="3.500" cy="17" r="2" fill="none" stroke="#888" stroke-width="1"/></svg>
<svg class="ic" style="left:1103.7px;top:68px;width:20px;height:20px" viewBox="0 0 20 20" ><g transform="translate(8,0) scale(0.65)"><path d="M0,8l9,-5l9,5l-9,5z" fill="#e8eefc" stroke="#a0a8c0" stroke-width=".6"/><path d="M7,9L7,-1" stroke="#1878f0" stroke-width="1.8"/><path d="M7,-1L8.8,1.6L5.2,1.6z" fill="#1878f0" stroke="#1878f0" stroke-width=".6"/><path d="M7,9L16,4" stroke="#30c030" stroke-width="1.6"/><path d="M16,4L14.7,6.7L13.0,3.7z" fill="#30c030" stroke="#30c030" stroke-width=".6"/><path d="M7,9L14,14" stroke="#e02020" stroke-width="1.8"/><path d="M14,14L10.8,13.9L12.9,11.0z" fill="#e02020" stroke="#e02020" stroke-width=".6"/><circle cx="7" cy="9" r="1.800" fill="#e8e8e8" stroke="#666" stroke-width=".5"/></g><path d="M8,15L2,8" stroke="#40b020" stroke-width="2.6"/><path d="M2,8L6.3,9.2L2.5,12.5z" fill="#40b020" stroke="#40b020" stroke-width=".6"/><path d="M3,9.5L9,17" stroke="#40b020" stroke-width="2.6"/><path d="M9,17L4.7,15.7L8.7,12.5z" fill="#40b020" stroke="#40b020" stroke-width=".6"/></svg>
<svg class="ic" style="left:1147px;top:68px;width:20px;height:20px" viewBox="0 0 20 20" ><rect x="1" y="1.500" width="18" height="17" fill="#a8a090"/><rect x="1.5" y="2.0" width="5.200" height="4.900" fill="#00d8f8"/><rect x="7.5" y="2.0" width="5.200" height="4.900" fill="#f8e000"/><rect x="13.5" y="2.0" width="5.200" height="4.900" fill="#00e800"/><rect x="1.5" y="7.6" width="5.200" height="4.900" fill="#f88800"/><rect x="7.5" y="7.6" width="5.200" height="4.900" fill="#a86000"/><rect x="13.5" y="7.6" width="5.200" height="4.900" fill="#f800f8"/><rect x="1.5" y="13.2" width="5.200" height="4.900" fill="#0000f0"/><rect x="7.5" y="13.2" width="5.200" height="4.900" fill="#00a830"/><rect x="13.5" y="13.2" width="5.200" height="4.900" fill="#808080"/></svg>
<svg class="ic" style="left:1173px;top:68px;width:20px;height:20px" viewBox="0 0 20 20" ><rect x="3" y="1" width="14" height="18" fill="url(#gP)" stroke="#7a8298" stroke-width="1"/><rect x="5" y="3" width="10" height="1.300" fill="#58a0f0"/><path d="M5,6h3M12,6h3" stroke="#f8b030" stroke-width="1"/><path d="M5,8.500h10" stroke="#a0e090" stroke-width="1"/><rect x="6.2" y="10.2" width="2.200" height="2.100" fill="#00d8f8"/><rect x="9.0" y="10.2" width="2.200" height="2.100" fill="#f8e000"/><rect x="11.8" y="10.2" width="2.200" height="2.100" fill="#00e800"/><rect x="6.2" y="12.899999999999999" width="2.200" height="2.100" fill="#f88800"/><rect x="9.0" y="12.899999999999999" width="2.200" height="2.100" fill="#a86000"/><rect x="11.8" y="12.899999999999999" width="2.200" height="2.100" fill="#f800f8"/><rect x="6.2" y="15.6" width="2.200" height="2.100" fill="#0000f0"/><rect x="9.0" y="15.6" width="2.200" height="2.100" fill="#00a830"/><rect x="11.8" y="15.6" width="2.200" height="2.100" fill="#808080"/></svg>
<svg class="ic" style="left:1199px;top:68px;width:20px;height:20px" viewBox="0 0 20 20" ><circle cx="10" cy="10" r="9" fill="#5a9a38" stroke="#88a878" stroke-width="1"/><path d="M6,18c0,-4 2,-5 4,-5s4,1 4,5z" fill="#c8c8b8" opacity=".8"/><g transform="translate(3,3) scale(1.1)" stroke-linecap="round" fill="none"><path d="M12.500,1.500l-6,6" stroke="#c8ccd4" stroke-width="1.500"/><path d="M6.500,7.500l-4.500,4.500" stroke="#3a78d0" stroke-width="2.800"/><path d="M3.500,3.500l9,9" stroke="#f0f0f0" stroke-width="2.300"/><path d="M0.800,4.600A2.700,2.700 0 1 0 4.600,0.800" stroke="#f0f0f0" stroke-width="1.900" stroke-linecap="butt"/><path d="M11,11l2,2" stroke="#b8bcc4" stroke-width="2.400"/></g></svg>
<svg class="ic" style="left:1225px;top:68px;width:20px;height:20px" viewBox="0 0 20 20" ><rect x="1.500" y="1.500" width="17" height="17" fill="url(#gP)" stroke="#555e78" stroke-width="1"/><rect x="2" y="2" width="16" height="3" fill="#3a78c8"/><path d="M6.500,7.500h11" stroke="#a8b820" stroke-width="1.600" stroke-dasharray="1.800 1"/><path d="M4,8v10" stroke="#b06020" stroke-width="1.600" stroke-dasharray="1.800 1.200"/><g transform="translate(7.5,9.5) scale(0.75)" stroke-linecap="round" fill="none"><path d="M12.500,1.500l-6,6" stroke="#c8ccd4" stroke-width="1.500"/><path d="M6.500,7.500l-4.500,4.500" stroke="#4a88e0" stroke-width="2.800"/><path d="M3.500,3.500l9,9" stroke="#a8b0c0" stroke-width="2.300"/><path d="M0.800,4.600A2.700,2.700 0 1 0 4.600,0.800" stroke="#a8b0c0" stroke-width="1.900" stroke-linecap="butt"/><path d="M11,11l2,2" stroke="#b8bcc4" stroke-width="2.400"/></g></svg>
<svg class="ic" style="left:1251px;top:68px;width:20px;height:20px" viewBox="0 0 20 20" ><path d="M2,0.8l1.200,1.200l-1.200,1.200l-1.200,-1.200z" fill="#2a5090"/><path d="M6,0.8l1.200,1.200l-1.200,1.200l-1.200,-1.200z" fill="#2a5090"/><path d="M10,0.8l1.200,1.200l-1.200,1.200l-1.200,-1.200z" fill="#2a5090"/><path d="M14,0.8l1.200,1.200l-1.200,1.200l-1.200,-1.200z" fill="#2a5090"/><path d="M18,0.8l1.200,1.200l-1.200,1.200l-1.200,-1.200z" fill="#2a5090"/><path d="M2,4.8l1.200,1.200l-1.200,1.200l-1.200,-1.200z" fill="#2a5090"/><path d="M2,8.8l1.200,1.200l-1.200,1.200l-1.200,-1.200z" fill="#2a5090"/><path d="M2,12.8l1.200,1.200l-1.200,1.200l-1.200,-1.200z" fill="#2a5090"/><path d="M2,16.8l1.200,1.200l-1.200,1.200l-1.200,-1.200z" fill="#2a5090"/><path d="M6,16.8l1.200,1.200l-1.200,1.200l-1.200,-1.200z" fill="#2a5090"/><path d="M10,16.8l1.200,1.200l-1.200,1.200l-1.200,-1.200z" fill="#2a5090"/><path d="M14,16.8l1.200,1.200l-1.200,1.200l-1.200,-1.200z" fill="#2a5090"/><path d="M18,16.8l1.200,1.200l-1.200,1.200l-1.200,-1.200z" fill="#2a5090"/><path d="M18,4.8l1.200,1.200l-1.200,1.200l-1.200,-1.200z" fill="#2a5090"/><path d="M18,8.8l1.200,1.200l-1.200,1.200l-1.200,-1.200z" fill="#2a5090"/><path d="M18,12.8l1.200,1.200l-1.200,1.200l-1.200,-1.200z" fill="#2a5090"/><path d="M14,12.8l1.200,1.200l-1.200,1.200l-1.200,-1.200z" fill="#2a5090"/><path d="M14,8.8l1.200,1.200l-1.200,1.200l-1.200,-1.200z" fill="#2a5090"/><path d="M5,9.500l6,-5.500c3,-2 6,-1 8.500,-.5v5l-4,3h-3.500l1,-2.500l-6,3z" fill="#e0b070" stroke="#8a6020" stroke-width=".6"/><circle cx="6.500" cy="14" r="3.200" fill="#f0e020" opacity=".9"/><path d="M4.500,14h4M6.500,12v4" stroke="#3a78e0" stroke-width="1.200"/></svg>
<svg class="ic" style="left:1277px;top:68px;width:20px;height:20px" viewBox="0 0 20 20" ><path d="M3,18.500l14,-1.500l1.500,-2l-1,-1z" fill="#444" opacity=".6"/><path d="M6.500,3.500l12,-2l-3.500,13.500l-13,2z" fill="#d06070" stroke="#2868d8" stroke-width="1.500"/><path d="M9.500,3l-3.500,13.500M12.500,2.500l-3.500,13.500M15.500,2l-3.500,13.500M5.500,7.500l12.500,-2M4.500,11l12.500,-2M3.500,14.500l12,-2" stroke="#f0c0c8" stroke-width=".7"/></svg>
<div class="lab" style="left:136.5px">属性/过滤器</div>
<div class="lab" style="left:427px">图形</div>
<div class="lab" style="left:730px">图像 (进阶)</div>
<div class="lab" style="left:955px">视图</div>
<div class="lab" style="left:1089px">工作平面</div>
<div class="lab" style="left:1223px">系统</div>
<div class="grip" style="left:13px;top:66px;height:40px"></div>
<div class="grip" style="left:264px;top:66px;height:40px"></div>
<div class="grip" style="left:593px;top:66px;height:40px"></div>
<div class="grip" style="left:870px;top:66px;height:40px"></div>
<div class="grip" style="left:1043px;top:66px;height:40px"></div>
<div class="grip" style="left:1138px;top:66px;height:40px"></div>
<div class="hgrip" style="left:0;top:121px;width:58px"></div>
<div class="hgrip" style="left:0;top:374px;width:58px"></div>
<svg class="ic" style="left:8px;top:134px;width:19px;height:19px" viewBox="0 0 20 20" ><path d="M2,4c2,-1 4,-1 6,-.5M1.500,7c2,-1 3.500,-1 5,-.8M2,10c1.500,-.5 3,-.6 4.500,-.3M3,13c1,-.3 2,-.4 3,-.2" stroke="#9ab0d0" stroke-width="1.100" fill="none"/><path d="M7.65,11.85l-6.050000000000001,6.050000000000001" stroke="#8c8c8c" stroke-width="3" stroke-linecap="round"/><path d="M7.65,11.35l-6.050000000000001,6.050000000000001" stroke="#d8d8d8" stroke-width="1.200" stroke-linecap="round"/><circle cx="11.5" cy="8" r="5.5" fill="url(#gL)" stroke="#7f8ca6" stroke-width="1.700"/><circle cx="11.5" cy="8" r="4.2" fill="none" stroke="#c8d8ee" stroke-width=".8"/></svg>
<svg class="ic" style="left:34.5px;top:134px;width:19px;height:19px" viewBox="0 0 20 20" ><path d="M2,3l13,14M7,1l12,13" stroke="#3a78e0" stroke-width="1.500" stroke-dasharray="4 2"/><ellipse cx="9" cy="16.500" rx="6" ry="1.500" fill="#444" opacity=".5"/><path d="M5,16L8.2,14.8L5.7,12.7z" fill="#f0d8a0" stroke="#444" stroke-width=".4"/><path d="M8.2,14.8L16.6,4.9L14.2,2.9L5.7,12.7z" fill="#e89a28" stroke="#8a5a10" stroke-width=".5"/><path d="M16.6,4.9L18.2,3.0L15.8,1.0L14.2,2.9z" fill="#d82020" stroke="#700" stroke-width=".4"/></svg>
<svg class="abs" style="left:48.5px;top:131.5px" width="6" height="4" viewBox="0 0 6 4"><path d="M0,0h6l-3,3.500z" fill="#000"/></svg>
<svg class="ic" style="left:8px;top:160px;width:19px;height:19px" viewBox="0 0 20 20" ><rect x="4" y="5" width="12" height="10" fill="url(#gP)" stroke="#8a8a8a" stroke-width="1"/><path d="M4.5,5L1,1.5" stroke="#40c020" stroke-width="1.5"/><path d="M1,1.5L3.8,2.0L1.5,4.3z" fill="#40c020" stroke="#40c020" stroke-width=".6"/><path d="M15.5,5L19,1.5" stroke="#40c020" stroke-width="1.5"/><path d="M19,1.5L18.5,4.3L16.2,2.0z" fill="#40c020" stroke="#40c020" stroke-width=".6"/><path d="M4.5,15L1,18.5" stroke="#40c020" stroke-width="1.5"/><path d="M1,18.5L1.5,15.7L3.8,18.0z" fill="#40c020" stroke="#40c020" stroke-width=".6"/><path d="M15.5,15L19,18.5" stroke="#40c020" stroke-width="1.5"/><path d="M19,18.5L16.2,18.0L18.5,15.7z" fill="#40c020" stroke="#40c020" stroke-width=".6"/></svg>
<svg class="ic" style="left:34.5px;top:160px;width:19px;height:19px" viewBox="0 0 20 20" ><path d="M8,3c-6,-2 -8,5 -1,8c7,3 12,8 11,2c-1,-4 -5,-4 -8,-1" stroke="#3a70d8" stroke-width="1.600" fill="none"/><ellipse cx="9" cy="16.500" rx="6" ry="1.500" fill="#444" opacity=".5"/><path d="M5,16L8.2,14.8L5.7,12.7z" fill="#f0d8a0" stroke="#444" stroke-width=".4"/><path d="M8.2,14.8L16.6,4.9L14.2,2.9L5.7,12.7z" fill="#e89a28" stroke="#8a5a10" stroke-width=".5"/><path d="M16.6,4.9L18.2,3.0L15.8,1.0L14.2,2.9z" fill="#d82020" stroke="#700" stroke-width=".4"/></svg>
<svg class="abs" style="left:48.5px;top:157.5px" width="6" height="4" viewBox="0 0 6 4"><path d="M0,0h6l-3,3.500z" fill="#000"/></svg>
<svg class="ic" style="left:8px;top:186px;width:19px;height:19px" viewBox="0 0 20 20" ><path d="M1,2.500h4M3,.5v4M1,6h4" stroke="#111" stroke-width=".9"/><g transform="translate(10,9.5) scale(0.78)" stroke="#333" stroke-width=".5" stroke-linejoin="round"><path d="M0,3l6,-3l6,3l-6,3z" fill="#b0b0b0"/><path d="M0,3l6,3v7l-6,-3z" fill="#6a6a6a"/><path d="M12,3l-6,3v7l6,-3z" fill="#3a3a3a"/></g><path d="M6.0,10.0l-5.5,5.5" stroke="#8c8c8c" stroke-width="3" stroke-linecap="round"/><path d="M6.0,9.5l-5.5,5.5" stroke="#d8d8d8" stroke-width="1.200" stroke-linecap="round"/><circle cx="9.5" cy="6.5" r="5" fill="url(#gL)" stroke="#7f8ca6" stroke-width="1.700"/><circle cx="9.5" cy="6.5" r="3.7" fill="none" stroke="#c8d8ee" stroke-width=".8"/><path d="M8,4l4,2.500l-4,2.500z" fill="#b8d0ec" stroke="#7a92b8" stroke-width=".5"/></svg>
<svg class="ic" style="left:34.5px;top:186px;width:19px;height:19px" viewBox="0 0 20 20" ><path d="M3,3h14v6.500h-4.500v5h4v3.500h-13.500z" fill="#e8ecf4" stroke="#f0f000" stroke-width="1.600"/><path d="M6,10l3.500,4.500l7,-10" stroke="#30b828" stroke-width="3" fill="none"/></svg>
<svg class="abs" style="left:22px;top:183.5px" width="6" height="4" viewBox="0 0 6 4"><path d="M0,0h6l-3,3.500z" fill="#000"/></svg>
<svg class="abs" style="left:48.5px;top:183.5px" width="6" height="4" viewBox="0 0 6 4"><path d="M0,0h6l-3,3.500z" fill="#000"/></svg>
<svg class="ic" style="left:8px;top:212px;width:19px;height:19px" viewBox="0 0 20 20" ><g transform="translate(0.5,3) scale(1.08)"><path d="M0,8l9,-5l9,5l-9,5z" fill="#e8eefc" stroke="#a0a8c0" stroke-width=".6"/><path d="M7,9L7,-1" stroke="#1878f0" stroke-width="1.8"/><path d="M7,-1L8.8,1.6L5.2,1.6z" fill="#1878f0" stroke="#1878f0" stroke-width=".6"/><path d="M7,9L16,4" stroke="#30c030" stroke-width="1.6"/><path d="M16,4L14.7,6.7L13.0,3.7z" fill="#30c030" stroke="#30c030" stroke-width=".6"/><path d="M7,9L14,14" stroke="#e02020" stroke-width="1.8"/><path d="M14,14L10.8,13.9L12.9,11.0z" fill="#e02020" stroke="#e02020" stroke-width=".6"/><circle cx="7" cy="9" r="1.800" fill="#e8e8e8" stroke="#666" stroke-width=".5"/></g></svg>
<svg class="ic" style="left:34.5px;top:212px;width:19px;height:19px" viewBox="0 0 20 20" ><path d="M1,12c1,-12 6,-12 8,-2c2,10 7,10 9,0" stroke="#3a70d8" stroke-width="1.600" fill="none"/><ellipse cx="9" cy="16.500" rx="6" ry="1.500" fill="#444" opacity=".5"/><path d="M5,16L8.2,14.8L5.7,12.7z" fill="#f0d8a0" stroke="#444" stroke-width=".4"/><path d="M8.2,14.8L16.6,4.9L14.2,2.9L5.7,12.7z" fill="#e89a28" stroke="#8a5a10" stroke-width=".5"/><path d="M16.6,4.9L18.2,3.0L15.8,1.0L14.2,2.9z" fill="#d82020" stroke="#700" stroke-width=".4"/></svg>
<svg class="abs" style="left:22px;top:209.5px" width="6" height="4" viewBox="0 0 6 4"><path d="M0,0h6l-3,3.500z" fill="#000"/></svg>
<svg class="abs" style="left:48.5px;top:209.5px" width="6" height="4" viewBox="0 0 6 4"><path d="M0,0h6l-3,3.500z" fill="#000"/></svg>
<svg class="ic" style="left:8px;top:238px;width:19px;height:19px" viewBox="0 0 20 20" ><path d="M1,2.500l9,-1l3,1.500l-9,1z" fill="#5a6ee8"/><path d="M1,5.500l9,-1l3,1.500l-9,1z" fill="#e8ecff" stroke="#8890c0" stroke-width=".4"/><path d="M1,8l9,-1l3,1.500l-9,1z" fill="#c8d0f0" stroke="#8890c0" stroke-width=".4"/><ellipse cx="10.500" cy="13.500" rx="7.500" ry="5" fill="#a87860" stroke="#6a4030" stroke-width=".7"/><circle cx="7" cy="15" r="1.900" fill="#2040e0"/><circle cx="11.500" cy="15.800" r="1.900" fill="#20c030"/><circle cx="14" cy="12" r="1.900" fill="#e02020"/><path d="M18.500,1.500l-7.500,9" stroke="#a05a20" stroke-width="1.800"/><path d="M11.500,10l-2.500,3.500" stroke="#e8e0d0" stroke-width="2"/></svg>
<svg class="ic" style="left:34.5px;top:238px;width:19px;height:19px" viewBox="0 0 20 20" ><path d="M3,17l13,-2l1.500,-1z" fill="#444" opacity=".5"/><path d="M6,4l12,-2l-3,12l-13,2.500z" fill="#a8c8f8" stroke="#2868d8" stroke-width="1.300"/><path d="M12,3l-3.500,12.500M4.500,9.500l12,-2" stroke="#e8f0ff" stroke-width="1"/></svg>
<svg class="abs" style="left:22px;top:235.5px" width="6" height="4" viewBox="0 0 6 4"><path d="M0,0h6l-3,3.500z" fill="#000"/></svg>
<svg class="abs" style="left:48.5px;top:235.5px" width="6" height="4" viewBox="0 0 6 4"><path d="M0,0h6l-3,3.500z" fill="#000"/></svg>
<svg class="ic" style="left:8px;top:264px;width:19px;height:19px" viewBox="0 0 20 20" ><path d="M2,8.500C3,2 12,1 15,5.500l2,-2v7h-7l2.500,-2.500C10.500,5 6.500,5.500 5.500,9z" fill="#5c8cd8" stroke="#3a68b8" stroke-width=".6"/><path d="M18,11.500C17,18 8,19 5,14.500l-2,2v-7h7l-2.500,2.500C9.500,15 13.500,14.500 14.500,11z" fill="#7aa8e8" stroke="#3a68b8" stroke-width=".6"/></svg>
<svg class="ic" style="left:34.5px;top:264px;width:19px;height:19px" viewBox="0 0 20 20" ><g transform="translate(2.5,2) scale(1.25)" stroke="#333" stroke-width=".5" stroke-linejoin="round"><path d="M0,3l6,-3l6,3l-6,3z" fill="#e0e0e0"/><path d="M0,3l6,3v7l-6,-3z" fill="#989898"/><path d="M12,3l-6,3v7l6,-3z" fill="#5a5a5a"/></g><path d="M4,18.500l10,0l3,-3z" fill="#555" opacity=".4"/></svg>
<svg class="abs" style="left:22px;top:261.5px" width="6" height="4" viewBox="0 0 6 4"><path d="M0,0h6l-3,3.500z" fill="#000"/></svg>
<svg class="abs" style="left:48.5px;top:261.5px" width="6" height="4" viewBox="0 0 6 4"><path d="M0,0h6l-3,3.500z" fill="#000"/></svg>
<svg class="ic" style="left:8px;top:290px;width:19px;height:19px" viewBox="0 0 20 20" ><ellipse cx="10" cy="18" rx="5" ry="1.500" fill="#555" opacity=".5"/><text x="10" y="16" font-size="19" font-weight="bold" text-anchor="middle" fill="#4a80d8" stroke="#2a58a8" stroke-width=".4" font-family="Liberation Sans,sans-serif">?</text></svg>
<svg class="ic" style="left:34.5px;top:290px;width:19px;height:19px" viewBox="0 0 20 20" ><path d="M2,4v14M18,4v14" stroke="#111" stroke-width="1.100"/><path d="M3,7.500h14" stroke="#e8d800" stroke-width="1.500"/><path d="M2.500,7.500l3,-2v4zM17.500,7.500l-3,-2v4z" fill="#111"/></svg>
<svg class="abs" style="left:22px;top:287.5px" width="6" height="4" viewBox="0 0 6 4"><path d="M0,0h6l-3,3.500z" fill="#000"/></svg>
<svg class="abs" style="left:48.5px;top:287.5px" width="6" height="4" viewBox="0 0 6 4"><path d="M0,0h6l-3,3.500z" fill="#000"/></svg>
<svg class="ic" style="left:8px;top:316px;width:19px;height:19px" viewBox="0 0 20 20" ><ellipse cx="10" cy="18" rx="6" ry="1.500" fill="#555" opacity=".4"/><path d="M4,5.500h12l-1.500,12.500h-9z" fill="#cfe4f4" stroke="#6a8aa8" stroke-width=".8"/><ellipse cx="10" cy="5.500" rx="6" ry="1.800" fill="#e8f4fc" stroke="#6a8aa8" stroke-width=".8"/><path d="M7,9l3,5M12,8l-3,7M8,15l5,-4" stroke="#90b0c8" stroke-width=".8"/><path d="M8,4l2,-3l2,3z" fill="#f0e040" stroke="#a89800" stroke-width=".4"/></svg>
<svg class="ic" style="left:34.5px;top:316px;width:19px;height:19px" viewBox="0 0 20 20" ><ellipse cx="11" cy="17.500" rx="6" ry="1.500" fill="#555" opacity=".4"/><path d="M3,8l6.500,-6v3.500c7,0 8.500,6 5.500,11c0.500,-4.500 -0.500,-6.500 -5.500,-6.500v4z" fill="url(#gG)" stroke="#8a8a8a" stroke-width=".5"/></svg>
<svg class="abs" style="left:22px;top:313.5px" width="6" height="4" viewBox="0 0 6 4"><path d="M0,0h6l-3,3.500z" fill="#000"/></svg>
<svg class="abs" style="left:48.5px;top:313.5px" width="6" height="4" viewBox="0 0 6 4"><path d="M0,0h6l-3,3.500z" fill="#000"/></svg>
<svg class="ic" style="left:8px;top:342px;width:19px;height:19px" viewBox="0 0 20 20" ><path d="M2,1v17M4.500,1v17" stroke="#222" stroke-width="1.300"/><path d="M1,16l8,3l10,-4M3,19l14,-3M1,13.500l4,2" stroke="#f08818" stroke-width="1.300" fill="none"/><circle cx="11" cy="9.500" r="5.500" fill="none" stroke="#8a4a20" stroke-width="1.600"/><path d="M11,2v15M3.500,9.500h15M5.700,4.200l10.600,10.600M16.300,4.200l-10.600,10.600" stroke="#8a4a20" stroke-width="1"/><circle cx="11" cy="9.500" r="1.800" fill="#f0c060" stroke="#8a4a20" stroke-width=".6"/></svg>
<svg class="ic" style="left:34.5px;top:342px;width:19px;height:19px" viewBox="0 0 20 20" ><path d="M8,10h9v9h-12v-6z" fill="#f4f4f4" stroke="#111" stroke-width="1.100"/><path d="M1,4h5l1.500,2h7v7h-13.500z" fill="#e8b840" stroke="#a87818" stroke-width=".7"/><path d="M1,13l2,-6h13l-2,6z" fill="url(#gF)" stroke="#a87818" stroke-width=".7"/><path d="M9,5c1,-3 5,-3 6,-1l1.500,-1.500v4.500h-4.500l1.500,-1.500c-1,-1 -2.500,-1 -4.500,-.5z" fill="#38b030"/></svg>
<svg class="abs" style="left:22px;top:339.5px" width="6" height="4" viewBox="0 0 6 4"><path d="M0,0h6l-3,3.500z" fill="#000"/></svg>
<div id="vp" class="abs">
<svg class="abs" style="left:-60px;top:-109px" width="1920" height="1048" viewBox="0 0 1920 1048" shape-rendering="crispEdges">
<g stroke="#000" stroke-width="1" stroke-linejoin="round">
<!-- ===== LEFT MACHINE : left side strips ===== -->
<defs><clipPath id="clL"><polygon points="435,185 437,460 440,806 473,964 469.600,337 456,285 448,248 446,246"/></clipPath></defs>
<g clip-path="url(#clL)">
<polygon points="430,185 446,246 449,460 453.500,740 456,964 430,964" fill="#a6a6b8"/>
<polygon points="446,246 448,248 456,285 457,460 459.700,740 462,964 456,964 453.500,740 449,460" fill="#94827f"/>
<polygon points="456,285 469.600,337 474,964 462,964 459.700,740 457,460" fill="#5f5f5f"/>
</g>
<polygon points="435,185 437,460 440,806 473,964 469.600,337 456,285 448,248 446,246" fill="none"/>
<!-- back cover top -->
<polygon points="435,185 782.400,180.500 793.100,232.700 445.800,236.400" fill="#a4a4b6"/>
<polygon points="445.800,236.400 793.100,232.700 794,240 446.400,246" fill="#b3b3c6"/>
<g fill="none" stroke-width=".8">
<polygon points="453.500,189 765,183 775,227.800 462.600,233.300"/>
<path d="M470.900,187.500L481.900,232.700M473.500,187.500L484.500,232.700"/>
<path d="M447,191.500h12M452.500,191l1,4"/>
</g>
<rect x="506.500" y="204.500" width="24" height="9" rx="2" fill="#b9b9cb"/><rect x="510" y="206.500" width="11" height="5.500" fill="#77778a" stroke-width=".7"/>
<rect x="714.500" y="201.500" width="24" height="8.500" rx="2" fill="#b9b9cb"/><rect x="722" y="203.500" width="11" height="5" fill="#9a9aac" stroke-width=".7"/>
<!-- brown band -->
<polygon points="448,247.500 809.300,240 820,273 468.700,277.600" fill="#94827f"/>
<polygon points="468.700,277.600 820,273 821.500,279.500 470,283" fill="#a28e8d"/>
<polygon points="448,247.500 468.700,277.600 470,283 456.500,285" fill="#a28e8d"/><path d="M451.500,248L470.500,282M455,248L474,282" fill="none" stroke-width=".8"/>
<!-- dark top face -->
<polygon points="456.500,285 803,279.700 814.800,331 469.600,336.500" fill="#6a6a6a"/>
<g fill="none" stroke-width=".8">
<polygon points="474.200,286.800 787.300,282.200 797,326.500 484,332"/>
<path d="M493,286.800L503.200,331M495.500,286.800L505.700,331"/>
<path d="M477,327.500h14M484,325.500l1,4"/>
</g>
<rect x="529" y="303.500" width="23.500" height="8.500" rx="2" fill="#a08c8c"/><rect x="534" y="305.500" width="11" height="5" fill="#6e6464" stroke-width=".7"/>
<rect x="737" y="300.500" width="23.500" height="8.500" rx="2" fill="#a08c8c"/><rect x="744" y="302.500" width="11" height="5" fill="#8a7a7a" stroke-width=".7"/>
<!-- right side post of left machine enclosure -->
<polygon points="803,279.700 821.500,279.500 831.500,329 836,341 837,700 820,700 814.800,331" fill="#9a98b8"/>
<polygon points="805,280 814,280 823.500,331 824,700 816.500,700 815.800,331" fill="#a48f90" stroke-width=".7"/><path d="M819.500,331L820,700" fill="none" stroke-width=".7"/>
<!-- front face -->
<polygon points="469.600,336.500 814.800,331 820,958 472.500,965" fill="#6b6b6b"/>

<!-- front face details -->
<g fill="none">
<path d="M469.800,353.500L815,348.500"/>
<polygon points="486.400,353.200 797,348.800 798.600,448.600 488.600,453.200"/>
<path d="M489.500,353.200L491.500,453"/>
<path d="M795,349L796.600,448.600"/>
<path d="M470.500,456.500L816,451.500"/>
<path d="M470.700,473.500L816.200,468"/>
</g>
<polygon points="532.900,383.900 603,383 604,433.400 533.500,434.900" fill="#6b6b6b"/>
<path d="M534,386.500h7" stroke-width=".8"/>
<circle cx="701.500" cy="434" r="4.800" fill="#2c3a2c"/><path d="M698.500,431l6,6" stroke="#3b8f3b"/>
<circle cx="717" cy="434" r="4.800" fill="#1d1d1d"/><circle cx="717" cy="434" r="3.200" fill="#22cc33" stroke="none"/>
<circle cx="732.600" cy="433.800" r="4.800" fill="#1d1d1d"/><circle cx="732.600" cy="433.800" r="3.200" fill="#aa1111" stroke="none"/>
<circle cx="748.200" cy="433.600" r="4.800" fill="#1d1d1d"/><circle cx="748.200" cy="433.600" r="3.200" fill="#e8d820" stroke="none"/>
<circle cx="764" cy="433.500" r="6.800" fill="#c41212"/><path d="M764,427v13" stroke="#7a0a0a"/>
<!-- doors -->
<polygon points="488.600,473 641.300,470.500 642.800,655.300 490.700,657.500" fill="#6b6b6b"/>
<polygon points="645.900,470.500 798.600,467.500 800,653.800 646.800,655.300" fill="#6b6b6b"/>
<path d="M643.500,470.500L645,655.300" fill="none"/>
<rect x="507.500" y="498" width="90.500" height="135.500" rx="3" fill="#9495b5" transform="rotate(-.5 552 565)"/>
<rect x="689" y="495.500" width="91" height="135" rx="3" fill="#9495b5" transform="rotate(-.5 734 563)"/>
<rect x="608.600" y="547" width="22" height="36" rx="2.500" fill="#a28c8c"/><rect x="612.500" y="553" width="9" height="24" fill="#4a4444"/><path d="M615.500,554v22M618.500,554v22" stroke="#2a2a2a" stroke-width=".8"/>
<rect x="657.500" y="546" width="22" height="36.500" rx="2.500" fill="#a28c8c"/><rect x="666.500" y="552.500" width="9.500" height="24" rx="1.500" fill="#b8a4a4"/><path d="M668.500,554v21" stroke-width=".8"/>
<!-- lower opening -->
<polygon points="488.600,658.900 800.200,655.500 802,942 491,945.700" fill="#686868"/>
<!-- ===== RIGHT MACHINE ===== -->
<!-- left side face lower (brownish) -->

<!-- roof -->
<polygon points="809.200,221.600 1171.600,214 1195.700,322.300 831.500,329" fill="#938380"/>
<g fill="none">
<path d="M822,274.800L1184.600,267.200" stroke-width="2"/><path d="M809.200,221.600L1171.600,214" stroke-width="2"/><path d="M831.500,329L1195.700,322.300" stroke-width="2"/>
<path d="M816,221.600L838.400,329M823,221.500L845.300,328.800"/>
<path d="M1159.500,214.300L1183.500,322.600M1164.500,214.200L1188.500,322.400M1168,214.200L1192,322.400"/>
</g>
<!-- upper front beam -->
<polygon points="831.500,329 1184,322.600 1184.500,336 847,341 836.700,341" fill="#a89494"/>
<path d="M838,334.500L1190,328" fill="none" stroke-width=".8"/>
<!-- left post (brownish/pink) -->
<polygon points="831.500,329 836,341 836.700,699.800 824,700 823.500,331 822,300" fill="#9c9cc2"/><polygon points="831.500,329 847,341 848.700,699.800 836.700,699.800 834.500,341" fill="#a08c8c"/>
<path d="M836.500,341L838,699.800M841.500,341L843,699.800" fill="none" stroke-width=".8"/>
<polygon points="818,646 823.400,644 836.500,722 837.500,952 824.300,887 820.500,887 818.500,700" fill="#917f7c"/><polygon points="820,668 824,668 824.300,887 820.500,887" fill="#a89292" stroke-width=".7"/><rect x="818.600" y="644" width="4.800" height="24" fill="#b0b0c8" stroke-width=".7"/><polygon points="823.400,644 826,644 837,712 836.500,722" fill="#a4a4c0" stroke-width=".7"/><rect x="820.700" y="887" width="4.800" height="17" fill="#b0b0c8" stroke-width=".7"/>
<!-- right post -->
<polygon points="1183.500,323 1196.400,322.700 1199.500,560 1199,694.700 1187,694.700" fill="#a08c8c"/>
<path d="M1188,323L1191.500,694.700M1192,323L1196,694.700" fill="none" stroke-width=".8"/>
<!-- doors -->
<polygon points="847,341 1015.300,340.500 1017,697 848.700,699.800" fill="#9a9aba"/>
<polygon points="1015.300,340.500 1185.400,336 1187,694.700 1017,697" fill="#9a9aba"/>
<polygon points="858.300,352 1005,349.700 1008.400,687 860.700,689.500" fill="#9495b5"/>
<polygon points="1025.600,349.700 1174.400,347.300 1176.800,686 1027.300,687" fill="#9495b5"/>
<path d="M847,341L858.300,352M1015.300,340.500L1005,349.700M1015.300,340.500L1025.600,349.700M1185.400,336L1174.400,347.300M848.700,699.800L860.700,689.500M1017,697L1008.400,687M1017,697L1027.300,687M1187,694.700L1176.800,686" fill="none" stroke-width=".8"/>
<path d="M1012,341.500L1014,695M1019.500,341.500L1021,695" fill="none" stroke-width=".8"/>
<!-- door handles -->
<rect x="983" y="500.500" width="22.500" height="38" rx="3" fill="#9c9cbc"/><rect x="994.500" y="507" width="8" height="25" rx="1.500" fill="#b8b8d0"/>
<rect x="1028.500" y="499.500" width="22.500" height="38" rx="3" fill="#9c9cbc"/><rect x="1032" y="507" width="6" height="24" fill="#4a4a58"/>
<!-- hinges -->
<g fill="#4e4e4e">
<rect x="835.600" y="350" width="10" height="22" /><rect x="847" y="350" width="10" height="22"/>
<rect x="1175" y="345" width="10" height="21"/><rect x="1187" y="345" width="11" height="21"/><rect x="1198" y="348" width="3" height="15"/>
<rect x="836.700" y="672.500" width="10" height="22"/><rect x="848.500" y="672.500" width="11" height="22"/>
<rect x="1177" y="666" width="10" height="23"/><rect x="1189" y="666" width="11" height="23"/><rect x="1200" y="668" width="4" height="17"/>
</g>
<g fill="#8a8a8a" stroke-width=".7">
<circle cx="840.500" cy="355" r="1.800"/><circle cx="840.500" cy="367" r="1.800"/><circle cx="852" cy="355" r="1.800"/><circle cx="852" cy="367" r="1.800"/>
<circle cx="1180" cy="350" r="1.800"/><circle cx="1180" cy="361" r="1.800"/><circle cx="1192.500" cy="350" r="1.800"/><circle cx="1192.500" cy="361" r="1.800"/>
<circle cx="841.500" cy="678" r="1.800"/><circle cx="841.500" cy="689" r="1.800"/><circle cx="854" cy="678" r="1.800"/><circle cx="854" cy="689" r="1.800"/>
<circle cx="1182" cy="671.500" r="1.800"/><circle cx="1182" cy="683.500" r="1.800"/><circle cx="1194.500" cy="671.500" r="1.800"/><circle cx="1194.500" cy="683.500" r="1.800"/>
</g>
<!-- table frame -->
<polygon points="836.700,699.800 1199,694.700 1202,955.300 837.500,960" fill="#adadc0"/>
<polygon points="836.700,699.800 1199,694.700 1183.600,703.500 853.900,708.500" fill="#b9b9cc"/>
<polygon points="853.900,724.600 1182.600,720.500 1184.900,937.800 856.200,942" fill="#9a8582"/>
<path d="M853.900,708.500L856.200,942M1183.600,703.500L1184.900,937.800" fill="none"/>
<!-- ===== mechanism in lower opening ===== -->
<polygon points="491,893 802,888 802,942 491,945.700" fill="#6c6c6c" />
<rect x="670" y="657" width="6.3" height="233" fill="#9a9aba" />
<rect x="706.7" y="657" width="5.7" height="233" fill="#9a9aba" />
<rect x="722" y="657" width="11" height="225" fill="#a2a2c2" />
<rect x="745" y="657" width="5" height="233" fill="#9a9aba" />
<rect x="683.8" y="657" width="15.4" height="232" fill="#3c3c3c" />
<rect x="689.3439999999999" y="657" width="5.236000000000001" height="232" fill="#9a9aba" stroke-width=".6"/>
<rect x="756.5" y="657" width="16" height="232" fill="#3c3c3c" />
<rect x="762.26" y="657" width="5.44" height="232" fill="#9a9aba" stroke-width=".6"/>
<circle cx="691.500" cy="825" r="1.600" fill="#000" stroke="none"/><circle cx="764.500" cy="825" r="1.600" fill="#000" stroke="none"/>
<circle cx="691.500" cy="852" r="1.600" fill="#000" stroke="none"/><circle cx="764.500" cy="852" r="1.600" fill="#000" stroke="none"/>
<circle cx="691.500" cy="879" r="1.600" fill="#000" stroke="none"/><circle cx="764.500" cy="879" r="1.600" fill="#000" stroke="none"/>
<rect x="776" y="657" width="13" height="5" fill="#b2b2c4" />
<rect x="780" y="663" width="8" height="2" fill="#b2b2c4" stroke-width=".6"/>
<rect x="699" y="670" width="3" height="5" fill="#2f7d32" stroke-width=".5"/>
<polygon points="670.600,699 790,697 793,728 676,733" fill="#b2b2c4" />
<path d="M684.0,702L726,700.5M736,700.5L789.0,699.2" fill="none" stroke-width=".8"/>
<rect x="684.0" y="699.5" width="42" height="3.4" fill="#c2c2d2" stroke-width=".7"/>
<rect x="737" y="698.5" width="52" height="3.4" fill="#c2c2d2" stroke-width=".7"/>
<path d="M685.2,708L727,706.5M737,706.5L789.8,705.2" fill="none" stroke-width=".8"/>
<rect x="685.2" y="705.5" width="42" height="3.4" fill="#c2c2d2" stroke-width=".7"/>
<rect x="738" y="704.5" width="52" height="3.4" fill="#c2c2d2" stroke-width=".7"/>
<path d="M686.4,714L728,712.5M738,712.5L790.6,711.2" fill="none" stroke-width=".8"/>
<rect x="686.4" y="711.5" width="42" height="3.4" fill="#c2c2d2" stroke-width=".7"/>
<rect x="739" y="710.5" width="52" height="3.4" fill="#c2c2d2" stroke-width=".7"/>
<path d="M687.6,720L729,718.5M739,718.5L791.4,717.2" fill="none" stroke-width=".8"/>
<rect x="687.6" y="717.5" width="42" height="3.4" fill="#c2c2d2" stroke-width=".7"/>
<rect x="740" y="716.5" width="52" height="3.4" fill="#c2c2d2" stroke-width=".7"/>
<path d="M688.8,726L730,724.5M740,724.5L792.2,723.2" fill="none" stroke-width=".8"/>
<rect x="688.8" y="723.5" width="42" height="3.4" fill="#c2c2d2" stroke-width=".7"/>
<rect x="741" y="722.5" width="52" height="3.4" fill="#c2c2d2" stroke-width=".7"/>
<polygon points="676,733 793,728 793,742 678,745" fill="#a8a8bc" />
<polygon points="692,724 726,722.500 727,743 693,745" fill="#bebed0" />
<circle cx="699" cy="731" r="2" fill="#1c1c1c" stroke="none"/>
<circle cx="718" cy="728.5" r="2" fill="#1c1c1c" stroke="none"/>
<circle cx="718" cy="739" r="2" fill="#1c1c1c" stroke="none"/>
<circle cx="739.5" cy="738.5" r="2" fill="#1c1c1c" stroke="none"/>
<rect x="697" y="712" width="12" height="4" fill="#9aa89a" stroke-width=".6"/>
<path d="M677,734l4,-1v10l-4,2zM729,734l4,-1v10l-4,2z" fill="#555"/>
<rect x="683" y="745" width="20" height="15" fill="#b2b2c4" />
<path d="M687,745v15M691,745v15M695,745v15M699,745v15" fill="none" stroke-width=".7"/>
<rect x="755.3" y="745" width="20" height="15" fill="#b2b2c4" />
<path d="M759,745v15M763,745v15M767,745v15M771,745v15" fill="none" stroke-width=".7"/>
<rect x="669.5" y="857.5" width="11.5" height="32.5" fill="#2f7d32" />
<rect x="681" y="862" width="4" height="4" fill="#2f7d32" stroke-width=".5"/>
<rect x="681" y="871" width="4" height="4" fill="#2f7d32" stroke-width=".5"/>
<ellipse cx="731" cy="885" rx="14" ry="4.500" fill="#c4c4d4"/><ellipse cx="729" cy="881.500" rx="8" ry="3.500" fill="#b4b4c8"/><ellipse cx="728" cy="879" rx="5.500" ry="2" fill="#a2a2c2" stroke-width=".6"/>
<rect x="777" y="866" width="12" height="14" fill="#b2b2c4" />
<rect x="780" y="869" width="7" height="8" fill="#9a9aba" stroke-width=".6"/>
<path d="M790,658L802,690M790,890L802,905M790,658V890" fill="none" stroke-width=".8"/>
<rect x="489.5" y="659" width="3" height="252" fill="#3c3c3c" />
<rect x="492.5" y="659" width="3.5" height="252" fill="#9a9aba" stroke-width=".6"/>
<rect x="496" y="659" width="2.5" height="252" fill="#3c3c3c" />
<rect x="498.3" y="661" width="7.2" height="27.6" fill="#2f7d32" />
<rect x="498.3" y="689.5" width="7.2" height="23.5" fill="#b2b2c4" />
<rect x="505.5" y="676" width="2.5" height="211" fill="#9a9aba" stroke-width=".6"/>
<rect x="508" y="676" width="2.5" height="211" fill="#55555f" stroke-width=".6"/>
<rect x="567.6" y="661" width="5.7" height="218" fill="#9a9aba" />
<rect x="545.5" y="661" width="3" height="232" fill="#9a9aba" stroke-width=".6"/>
<rect x="548.5" y="661" width="3.5" height="232" fill="#3c3c3c" />
<rect x="552" y="661" width="3.5" height="232" fill="#9a9aba" stroke-width=".6"/>
<rect x="555.5" y="661" width="3.5" height="232" fill="#3c3c3c" />
<rect x="559" y="661" width="3.7" height="232" fill="#9a9aba" stroke-width=".6"/>
<rect x="512.6" y="860.4" width="30" height="31.4" fill="#2f7d32" />
<rect x="515" y="891" width="4" height="2.5" fill="#2f7d32" stroke-width=".5"/>
<rect x="537" y="891" width="4" height="2.5" fill="#2f7d32" stroke-width=".5"/>
<polygon points="511.0,753.0 555.5,704.5 557.4,706.3 512.9,754.8" fill="#8e8ea8" stroke-width=".9"/>
<polygon points="513.4,755.2 557.9,706.7 559.8,708.4 515.3,756.9" fill="#8e8ea8" stroke-width=".9"/>
<rect x="508.5" y="754" width="6" height="5" fill="#a8a8bc" stroke-width=".7"/>
<rect x="554.5" y="702.5" width="6" height="5" fill="#77778c" stroke-width=".7"/>
<polygon points="531,703 602.800,700.500 603,733 531.500,736" fill="#b2b2c4" />
<rect x="532.0" y="703.5" width="30" height="3.4" fill="#c2c2d2" stroke-width=".7"/>
<rect x="566" y="702.5" width="36" height="3.4" fill="#c2c2d2" stroke-width=".7"/>
<rect x="532.3" y="709.5" width="30" height="3.4" fill="#c2c2d2" stroke-width=".7"/>
<rect x="566" y="708.5" width="36" height="3.4" fill="#c2c2d2" stroke-width=".7"/>
<rect x="532.6" y="715.5" width="30" height="3.4" fill="#c2c2d2" stroke-width=".7"/>
<rect x="566" y="714.5" width="36" height="3.4" fill="#c2c2d2" stroke-width=".7"/>
<rect x="532.9" y="721.5" width="30" height="3.4" fill="#c2c2d2" stroke-width=".7"/>
<rect x="566" y="720.5" width="36" height="3.4" fill="#c2c2d2" stroke-width=".7"/>
<rect x="533.2" y="727.5" width="30" height="3.4" fill="#c2c2d2" stroke-width=".7"/>
<rect x="566" y="726.5" width="36" height="3.4" fill="#c2c2d2" stroke-width=".7"/>
<polygon points="531.500,736 578,734.500 578,747 532,747" fill="#a4a4ba" />
<rect x="590" y="736" width="14" height="8" fill="#8a8a9c" stroke-width=".7"/>
<polygon points="511.0,688.0 545.5,660.5 547.1,662.5 512.6,690.0" fill="#8e8ea8" stroke-width=".9"/>
<polygon points="513.0,690.5 547.5,663.0 549.1,665.0 514.6,692.5" fill="#8e8ea8" stroke-width=".9"/>
<rect x="508.5" y="689" width="6" height="5" fill="#a8a8bc" stroke-width=".7"/>
<rect x="544.5" y="658.5" width="6" height="5" fill="#77778c" stroke-width=".7"/>
<polygon points="512.6,813.0 559.0,766.0 560.9,767.8 514.5,814.8" fill="#8e8ea8" stroke-width=".9"/>
<polygon points="514.9,815.2 561.3,768.2 563.1,770.1 516.7,817.1" fill="#8e8ea8" stroke-width=".9"/>
<rect x="510.1" y="814" width="6" height="5" fill="#a8a8bc" stroke-width=".7"/>
<rect x="558" y="764" width="6" height="5" fill="#77778c" stroke-width=".7"/>
<polygon points="512.6,879.0 559.8,827.4 561.7,829.2 514.5,880.8" fill="#8e8ea8" stroke-width=".9"/>
<polygon points="515.0,881.2 562.2,829.6 564.1,831.3 516.9,882.9" fill="#8e8ea8" stroke-width=".9"/>
<rect x="510.1" y="880" width="6" height="5" fill="#a8a8bc" stroke-width=".7"/>
<rect x="558.8" y="825.4" width="6" height="5" fill="#77778c" stroke-width=".7"/>
<rect x="588.5" y="668" width="5.5" height="78" fill="#9a9aba" />
<rect x="610" y="668.6" width="8" height="54.4" fill="#a8a8c4" />
<rect x="621.5" y="668.6" width="2.8" height="54" fill="#b2b2c4" stroke-width=".6"/>
<rect x="618" y="723" width="15.4" height="174.6" fill="#9c9cc0" />
<circle cx="623.500" cy="734.5" r="1" fill="#000" stroke="none"/><circle cx="627.500" cy="734.5" r="1" fill="#000" stroke="none"/>
<circle cx="623.500" cy="814" r="1" fill="#000" stroke="none"/><circle cx="627.500" cy="814" r="1" fill="#000" stroke="none"/>
<circle cx="623.500" cy="892" r="1" fill="#000" stroke="none"/><circle cx="627.500" cy="892" r="1" fill="#000" stroke="none"/>
<rect x="634" y="700" width="9" height="22" fill="#8c8c9c" stroke-width=".7"/>
<rect x="632.5" y="708" width="3" height="3.5" fill="#e8e020" stroke-width=".5"/>
<rect x="634.5" y="722" width="3" height="3.5" fill="#e8e020" stroke-width=".5"/>
<rect x="592" y="746" width="19.4" height="27.6" fill="#2f7d32" />
<rect x="595" y="742" width="13" height="4" fill="#6c8c6c" stroke-width=".6"/>
<rect x="588.5" y="773.6" width="27.2" height="26.4" fill="#77778c" />
<rect x="588.5" y="773.6" width="27.2" height="3" fill="#b2b2c4" stroke-width=".6"/>
<rect x="588.5" y="797" width="27.2" height="3" fill="#b2b2c4" stroke-width=".6"/>
<rect x="597" y="779" width="10" height="15" fill="#e4e4ec" stroke-width=".7"/>
<rect x="598.5" y="784" width="7" height="4" fill="#333" stroke-width=".5"/>
<rect x="599.3" y="801.7" width="7.2" height="85.8" fill="#ececf2" />
<rect x="594.5" y="857" width="16" height="5" fill="#c8c8d8" stroke-width=".7"/>
<rect x="594" y="862" width="38.8" height="9.8" fill="#a2a2bc" />
<circle cx="620" cy="867" r="1.200" fill="#111" stroke="none"/>
<circle cx="624" cy="867" r="1.200" fill="#111" stroke="none"/>
<circle cx="628" cy="867" r="1.200" fill="#111" stroke="none"/>
<rect x="612" y="871" width="6" height="25" fill="#8c8ca4" stroke-width=".7"/>
<rect x="577" y="661" width="3.3" height="262" fill="#9a9aba" stroke-width=".6"/>
<rect x="580.3" y="661" width="4" height="262" fill="#3c3c3c" />
<rect x="584.3" y="661" width="4.2" height="262" fill="#9a9aba" stroke-width=".6"/>
<rect x="644.3" y="661" width="3.3" height="262" fill="#9a9aba" stroke-width=".6"/>
<rect x="647.5999999999999" y="661" width="4" height="262" fill="#3c3c3c" />
<rect x="651.5999999999999" y="661" width="4.2" height="262" fill="#9a9aba" stroke-width=".6"/>
<rect x="577" y="658.6" width="78.7" height="4.5" fill="#b2b2c4" />
<rect x="579" y="663.1" width="74.7" height="4.6" fill="#9292b0" />
<path d="M491,909.500L577,908M656,907L802,904.500" fill="none"/>
<rect x="491" y="925" width="16" height="20" fill="#a4a4c0" />
<rect x="497" y="930" width="9" height="9" fill="#8e8eac" stroke-width=".6"/>
<rect x="507.500" y="923" width="62" height="10.500" fill="#d8d8e2" transform="rotate(-.8 538 928)"/><rect x="507.500" y="923" width="8" height="10.500" fill="#a8a8ba" stroke-width=".6" transform="rotate(-.8 538 928)"/>
<polygon points="569,905 766,900 766,906 569,911" fill="#8a8aa6" />
<polygon points="572,921 764,915.500 764.500,938 572.500,944.500" fill="#8c8ca8" />
<path d="M572,926L764,920.2" fill="none" stroke-width=".8"/>
<path d="M572,931.5L764,925.7" fill="none" stroke-width=".8"/>
<path d="M572,937L764,931.2" fill="none" stroke-width=".8"/>
<path d="M572,941L764,935.2" fill="none" stroke-width=".8"/>
<rect x="577" y="906" width="78" height="17" fill="#7a7a92" />
<rect x="590" y="908" width="40" height="6" fill="#9a9ab4" stroke-width=".7"/>
<rect x="597" y="911.5" width="18" height="5" fill="#2f7d32" stroke-width=".6"/>
<rect x="604" y="916" width="10" height="4" fill="#1c5c1c" stroke-width=".5"/>
<rect x="764" y="897" width="4" height="42" fill="#b2b2c4" stroke-width=".7"/>
<rect x="768" y="905" width="20" height="4" fill="#8a8aa0" stroke-width=".7"/>
<path d="M779,909L786,939M786,908L793,938" fill="none" stroke-width=".8"/>
<path d="M473.900,949L819.800,944" fill="none"/>
<path d="M488.600,658.900L491,945.700M800.200,655.500L802,942" fill="none"/>
<rect x="818" y="521" width="14" height="6" fill="#b4b4c8" />
<rect x="820" y="528" width="7" height="5" fill="#e06060" />
<rect x="819" y="534" width="13" height="20" fill="#b0b0c8" />
<rect x="819" y="560" width="13" height="10" fill="#c0c0d0" />
<rect x="819" y="575" width="13" height="12" fill="#8c8ca0" />
<rect x="818.500" y="589" width="14" height="55" fill="#a8a8c0" />
<path d="M832.500,534v22" stroke="#2060c0" fill="none"/>
<path d="M450.500,283L452,331M451.500,342L453.500,372" stroke="#20b8c8" stroke-width="2.200" fill="none"/><path d="M449.500,282v30M452.500,350L455.500,392" stroke="#1060b0" stroke-width="1" fill="none"/>
<polygon points="448,404 451,403 456,428 453,431" fill="#f0f0f0" stroke="none"/><rect x="445.500" y="402" width="3" height="8" fill="#30c040" stroke="none"/><rect x="446.500" y="410" width="3" height="8" fill="#e8e040" stroke="none"/><rect x="446.500" y="418" width="5" height="13" fill="#c01818" stroke="none"/>
<rect x="438.5" y="248" width="3" height="60" rx="1.500" fill="#000" stroke="none"/>
<rect x="441" y="300" width="3" height="60" rx="1.500" fill="#000" stroke="none"/>
<rect x="443" y="470" width="3" height="50" rx="1.500" fill="#000" stroke="none"/>
<rect x="459" y="505" width="3" height="40" rx="1.500" fill="#000" stroke="none"/>
<rect x="442" y="640" width="3" height="60" rx="1.500" fill="#000" stroke="none"/>
<rect x="444" y="700" width="3" height="50" rx="1.500" fill="#000" stroke="none"/>
<rect x="462" y="760" width="3" height="40" rx="1.500" fill="#000" stroke="none"/>
<path d="M438,300L446,400M438,330L447,430M439,500L452,600M440,530L454,640M441,700L470,900M445,760L471,930" fill="none" stroke-width=".8"/>
<rect x="475.5" y="966" width="13" height="8.500" fill="#c4c4d0"/><rect x="475.5" y="966" width="4" height="8.500" fill="#e4e4ec" stroke="none"/><rect x="479" y="974.5" width="6" height="16" fill="#d0d0da"/><rect x="478" y="987" width="8" height="3" fill="#b8b8c8" stroke-width=".7"/><ellipse cx="482" cy="992" rx="9" ry="3.200" fill="#c4c4d0"/><ellipse cx="482" cy="993.6" rx="9" ry="2.400" fill="#1c1c1c" stroke="none"/><ellipse cx="482" cy="991.5" rx="4" ry="1.200" fill="#e8e8f0" stroke-width=".5"/>
<path d="M491,970h20l-2,6h-16z" fill="#c8c8d4"/><ellipse cx="501" cy="981" rx="8.0" ry="10" fill="#d8d8e2"/><ellipse cx="502.5" cy="981.5" rx="5.0" ry="7.199999999999999" fill="#9c9cae"/><ellipse cx="503.5" cy="982" rx="2.8000000000000003" ry="4.5" fill="#e0e0ea" stroke-width=".6"/>
<path d="M777.5,964h20l-2,6h-16z" fill="#c8c8d4"/><ellipse cx="787.5" cy="975" rx="8.0" ry="10" fill="#d8d8e2"/><ellipse cx="786.0" cy="975.5" rx="5.0" ry="7.199999999999999" fill="#9c9cae"/><ellipse cx="785.0" cy="976" rx="2.8000000000000003" ry="4.5" fill="#e0e0ea" stroke-width=".6"/>
<rect x="805.4" y="966" width="13" height="8.500" fill="#c4c4d0"/><rect x="805.4" y="966" width="4" height="8.500" fill="#e4e4ec" stroke="none"/><rect x="808.9" y="974.5" width="6" height="16" fill="#d0d0da"/><rect x="807.9" y="987" width="8" height="3" fill="#b8b8c8" stroke-width=".7"/><ellipse cx="811.9" cy="992" rx="9" ry="3.200" fill="#c4c4d0"/><ellipse cx="811.9" cy="993.6" rx="9" ry="2.400" fill="#1c1c1c" stroke="none"/><ellipse cx="811.9" cy="991.5" rx="4" ry="1.200" fill="#e8e8f0" stroke-width=".5"/>
<rect x="840.0" y="962.5" width="13" height="8.500" fill="#c4c4d0"/><rect x="840.0" y="962.5" width="4" height="8.500" fill="#e4e4ec" stroke="none"/><rect x="843.5" y="971.0" width="6" height="17" fill="#d0d0da"/><rect x="842.5" y="984.5" width="8" height="3" fill="#b8b8c8" stroke-width=".7"/><ellipse cx="846.5" cy="989.5" rx="9" ry="3.200" fill="#c4c4d0"/><ellipse cx="846.5" cy="991.1" rx="9" ry="2.400" fill="#1c1c1c" stroke="none"/><ellipse cx="846.5" cy="989.0" rx="4" ry="1.200" fill="#e8e8f0" stroke-width=".5"/>
<path d="M856,963h20l-2,6h-16z" fill="#c8c8d4"/><ellipse cx="866" cy="974" rx="8.0" ry="10" fill="#d8d8e2"/><ellipse cx="867.5" cy="974.5" rx="5.0" ry="7.199999999999999" fill="#9c9cae"/><ellipse cx="868.5" cy="975" rx="2.8000000000000003" ry="4.5" fill="#e0e0ea" stroke-width=".6"/>
<path d="M1159,959.5h20l-2,6h-16z" fill="#c8c8d4"/><ellipse cx="1169" cy="970.5" rx="8.0" ry="10" fill="#d8d8e2"/><ellipse cx="1167.5" cy="971.0" rx="5.0" ry="7.199999999999999" fill="#9c9cae"/><ellipse cx="1166.5" cy="971.5" rx="2.8000000000000003" ry="4.5" fill="#e0e0ea" stroke-width=".6"/>
<rect x="1187.5" y="958.5" width="13" height="8.500" fill="#c4c4d0"/><rect x="1187.5" y="958.5" width="4" height="8.500" fill="#e4e4ec" stroke="none"/><rect x="1191" y="967.0" width="6" height="17" fill="#d0d0da"/><rect x="1190" y="980.5" width="8" height="3" fill="#b8b8c8" stroke-width=".7"/><ellipse cx="1194" cy="985.5" rx="9" ry="3.200" fill="#c4c4d0"/><ellipse cx="1194" cy="987.1" rx="9" ry="2.400" fill="#1c1c1c" stroke="none"/><ellipse cx="1194" cy="985.0" rx="4" ry="1.200" fill="#e8e8f0" stroke-width=".5"/>
<rect x="442" y="846" width="7" height="3" fill="#c8c8d4" stroke-width=".7"/>
<rect x="454" y="896" width="7" height="3" fill="#c8c8d4" stroke-width=".7"/>
<rect x="456" y="908" width="7" height="3" fill="#c8c8d4" stroke-width=".7"/>
<rect x="463" y="940" width="7" height="3" fill="#c8c8d4" stroke-width=".7"/>
<rect x="465" y="949" width="7" height="3" fill="#c8c8d4" stroke-width=".7"/>
</g>
<g font-family="'Liberation Sans','Noto Sans CJK SC',sans-serif" opacity=".93" shape-rendering="geometricPrecision">
<defs><linearGradient id="wmG" x1="0" y1="0" x2="0" y2="1"><stop offset="0" stop-color="#f0701c"/><stop offset="1" stop-color="#f7a41e"/></linearGradient>
<linearGradient id="wmY" x1="0" y1="0" x2="1" y2="1"><stop offset="0" stop-color="#f8b21c"/><stop offset="1" stop-color="#f07a1c"/></linearGradient></defs>
<g fill="url(#wmG)">
<path d="M891,517l2.600,1v19.500l9,1.500v1h-11.600z"/>
<path d="M894.600,512l3.400,2.500v22l4.500,1.500h-7.900z"/>
<path d="M898.800,508l3.300,3.500v23l6,3.500h-5.500l-3.800,-2.500z"/>
<path d="M936.700,517l-2.600,1v19.500l-9,1.500v1h11.600z"/>
<path d="M933.100,512l-3.400,2.500v22l-4.500,1.500h7.900z"/>
<path d="M928.900,508l-3.300,3.500v23l-6,3.500h5.500l3.800,-2.500z"/>
<path d="M891,539.500l17,-1.500l2.500,1h6.500l2.500,-1l17.200,1.500v.8h-45.700z"/>
<ellipse cx="913.800" cy="538.500" rx="4.500" ry="1.200" fill="#f0701c"/>
</g>
<path d="M914.300,510C902.500,510.500 900,523.500 906.800,527.500C906,521 909,517.800 914.300,517.400z" fill="url(#wmY)"/>
<path d="M913.300,518V537C925.500,534.500 925.500,522 920.800,519.200C921.800,525.500 919,528.300 915.300,528.800V518z" fill="url(#wmY)"/>
<text x="946.500" y="528" font-size="16.400" font-weight="500" fill="url(#wmG)" stroke="#f4901e" stroke-width=".35" textLength="82.500" lengthAdjust="spacingAndGlyphs">智造资料网</text>
<text x="947" y="538" font-size="4.400" font-weight="bold" fill="#f49a20" textLength="81.500" lengthAdjust="spacingAndGlyphs">INTELLIGENT MANUFACTURING DATA</text>
</g>
<!-- ===== axes ===== -->
<g font-family="'Liberation Sans',sans-serif" font-size="11">
<rect x="120.500" y="916.500" width="25" height="24.500" fill="#7b8c5e" stroke="#f0f000" stroke-width="1"/>
<path d="M120,946.500h26v-5" fill="none" stroke="#c8c8c8" stroke-width="1"/>
<path d="M119.500,941V900" stroke="#10d010" stroke-width="2.200"/><path d="M115,903l4.500,-11l4.500,11z" fill="#10e010"/>
<path d="M119,941.500H150" stroke="#d01010" stroke-width="2.400"/><path d="M146,937.500l10,4l-10,4z" fill="#c01010"/>
<circle cx="118.500" cy="941.500" r="3" fill="#808080"/>
<path d="M119.500,943l2.500,8" stroke="#20c8d8" stroke-width="2.400"/><path d="M118.500,950l7,0l-3,5z" fill="#30d0e0"/>
<text x="114.500" y="890.500" fill="#c8c8c8">Y</text>
<text x="156.500" y="946" fill="#e02020" font-size="12">X</text>
<text x="118.500" y="961" fill="#d8d8d8">Z</text>
</g>
</svg><div class="vb" style="left:4px;top:4px"><svg class="ic" style="left:2px;top:2px;width:20px;height:20px" viewBox="0 0 20 20" ><rect x="1.500" y="2.500" width="17" height="3.500" fill="#3a5488"/><rect x="1.500" y="8.300" width="17" height="3.500" fill="#3a5488"/><rect x="1.500" y="14" width="17" height="3.500" fill="#3a5488"/><path d="M2,3.500h16M2,9.300h16M2,15h16" stroke="#6a84b8" stroke-width=".6"/></svg></div>
<div class="vb" style="left:32px;top:4px"><svg class="ic" style="left:2px;top:2px;width:20px;height:20px" viewBox="0 0 20 20" ><rect x="4" y="5" width="12" height="10" fill="url(#gP)" stroke="#8a8a8a" stroke-width="1"/><path d="M4.5,5L1,1.5" stroke="#40c020" stroke-width="1.5"/><path d="M1,1.5L3.8,2.0L1.5,4.3z" fill="#40c020" stroke="#40c020" stroke-width=".6"/><path d="M15.5,5L19,1.5" stroke="#40c020" stroke-width="1.5"/><path d="M19,1.5L18.5,4.3L16.2,2.0z" fill="#40c020" stroke="#40c020" stroke-width=".6"/><path d="M4.5,15L1,18.5" stroke="#40c020" stroke-width="1.5"/><path d="M1,18.5L1.5,15.7L3.8,18.0z" fill="#40c020" stroke="#40c020" stroke-width=".6"/><path d="M15.5,15L19,18.5" stroke="#40c020" stroke-width="1.5"/><path d="M19,18.5L16.2,18.0L18.5,15.7z" fill="#40c020" stroke="#40c020" stroke-width=".6"/></svg></div>
<div class="vb" style="left:60px;top:4px"><svg class="ic" style="left:2px;top:2px;width:20px;height:20px" viewBox="0 0 20 20" ><path d="M2,4c2,-1 4,-1 6,-.5M1.500,7c2,-1 3.500,-1 5,-.8M2,10c1.500,-.5 3,-.6 4.500,-.3M3,13c1,-.3 2,-.4 3,-.2" stroke="#9ab0d0" stroke-width="1.100" fill="none"/><path d="M7.65,11.85l-6.050000000000001,6.050000000000001" stroke="#8c8c8c" stroke-width="3" stroke-linecap="round"/><path d="M7.65,11.35l-6.050000000000001,6.050000000000001" stroke="#d8d8d8" stroke-width="1.200" stroke-linecap="round"/><circle cx="11.5" cy="8" r="5.5" fill="url(#gL)" stroke="#7f8ca6" stroke-width="1.700"/><circle cx="11.5" cy="8" r="4.2" fill="none" stroke="#c8d8ee" stroke-width=".8"/></svg></div>
<div class="vb" style="left:88px;top:4px"><svg class="ic" style="left:2px;top:2px;width:20px;height:20px" viewBox="0 0 20 20" ><path d="M1,11l8,-5l9,4l-8,6z" fill="none" stroke="#555" stroke-width=".6"/><path d="M9.5,12L9.5,1.5" stroke="#1878f0" stroke-width="2"/><path d="M9.5,1.5L11.5,4.5L7.5,4.5z" fill="#1878f0" stroke="#1878f0" stroke-width=".6"/><path d="M9.5,12L17.5,6.5" stroke="#30c030" stroke-width="1.5"/><path d="M17.5,6.5L16.4,9.3L14.5,6.5z" fill="#30c030" stroke="#30c030" stroke-width=".6"/><path d="M9.5,12L16.5,18" stroke="#e02020" stroke-width="2"/><path d="M16.5,18L12.9,17.6L15.6,14.5z" fill="#e02020" stroke="#e02020" stroke-width=".6"/><circle cx="9.500" cy="12" r="1.800" fill="#e8e8e8" stroke="#444" stroke-width=".5"/></svg></div>
<div class="vb" style="left:116px;top:4px"><svg class="ic" style="left:2px;top:2px;width:20px;height:20px" viewBox="0 0 20 20" ><path d="M1.1,14.1L10.5,11.5L19.7,14.1M10.5,11.5L10.5,1.1" fill="none" stroke="#000" stroke-width="1.200"/><polygon points="10.5,1.1 19.7,4.5 10.5,8.2 1.1,4.5" fill="url(#gGr)" stroke="#108010" stroke-width=".5"/><g fill="none" stroke="#000" stroke-width="1.400" stroke-linejoin="round"><polygon points="10.5,1.1 19.7,4.5 19.7,14.1 10.5,19.4 1.1,14.1 1.1,4.5"/><path d="M1.1,4.5L10.5,8.2L19.7,4.5M10.5,8.2L10.5,19.4"/></g></svg></div>
<div class="vb" style="left:144px;top:4px"><svg class="ic" style="left:2px;top:2px;width:20px;height:20px" viewBox="0 0 20 20" ><path d="M1.1,14.1L10.5,11.5L19.7,14.1M10.5,11.5L10.5,1.1" fill="none" stroke="#000" stroke-width="1.200"/><polygon points="10.5,11.5 19.7,14.1 10.5,19.4 1.1,14.1" fill="url(#gGr)" stroke="#108010" stroke-width=".5"/><g fill="none" stroke="#000" stroke-width="1.400" stroke-linejoin="round"><polygon points="10.5,1.1 19.7,4.5 19.7,14.1 10.5,19.4 1.1,14.1 1.1,4.5"/><path d="M1.1,4.5L10.5,8.2L19.7,4.5M10.5,8.2L10.5,19.4"/></g></svg></div>
<div class="vb" style="left:172px;top:4px"><svg class="ic" style="left:2px;top:2px;width:20px;height:20px" viewBox="0 0 20 20" ><path d="M1.1,14.1L10.5,11.5L19.7,14.1M10.5,11.5L10.5,1.1" fill="none" stroke="#000" stroke-width="1.200"/><polygon points="1.1,4.5 10.5,1.1 10.5,11.5 1.1,14.1" fill="url(#gGr)" stroke="#108010" stroke-width=".5"/><g fill="none" stroke="#000" stroke-width="1.400" stroke-linejoin="round"><polygon points="10.5,1.1 19.7,4.5 19.7,14.1 10.5,19.4 1.1,14.1 1.1,4.5"/><path d="M1.1,4.5L10.5,8.2L19.7,4.5M10.5,8.2L10.5,19.4"/></g></svg></div>
<div class="vb" style="left:200px;top:4px"><svg class="ic" style="left:2px;top:2px;width:20px;height:20px" viewBox="0 0 20 20" ><path d="M1.1,14.1L10.5,11.5L19.7,14.1M10.5,11.5L10.5,1.1" fill="none" stroke="#000" stroke-width="1.200"/><polygon points="10.5,8.2 19.7,4.5 19.7,14.1 10.5,19.4" fill="url(#gGr)" stroke="#108010" stroke-width=".5"/><g fill="none" stroke="#000" stroke-width="1.400" stroke-linejoin="round"><polygon points="10.5,1.1 19.7,4.5 19.7,14.1 10.5,19.4 1.1,14.1 1.1,4.5"/><path d="M1.1,4.5L10.5,8.2L19.7,4.5M10.5,8.2L10.5,19.4"/></g></svg></div>
<div class="vb" style="left:228px;top:4px"><svg class="ic" style="left:2px;top:2px;width:20px;height:20px" viewBox="0 0 20 20" ><path d="M1.1,14.1L10.5,11.5L19.7,14.1M10.5,11.5L10.5,1.1" fill="none" stroke="#000" stroke-width="1.200"/><polygon points="1.1,4.5 10.5,8.2 10.5,19.4 1.1,14.1" fill="url(#gGr)" stroke="#108010" stroke-width=".5"/><g fill="none" stroke="#000" stroke-width="1.400" stroke-linejoin="round"><polygon points="10.5,1.1 19.7,4.5 19.7,14.1 10.5,19.4 1.1,14.1 1.1,4.5"/><path d="M1.1,4.5L10.5,8.2L19.7,4.5M10.5,8.2L10.5,19.4"/></g></svg></div>
<div class="vb" style="left:256px;top:4px"><svg class="ic" style="left:2px;top:2px;width:20px;height:20px" viewBox="0 0 20 20" ><path d="M1.1,14.1L10.5,11.5L19.7,14.1M10.5,11.5L10.5,1.1" fill="none" stroke="#000" stroke-width="1.200"/><polygon points="10.5,1.1 19.7,4.5 19.7,14.1 10.5,11.5" fill="url(#gGr)" stroke="#108010" stroke-width=".5"/><g fill="none" stroke="#000" stroke-width="1.400" stroke-linejoin="round"><polygon points="10.5,1.1 19.7,4.5 19.7,14.1 10.5,19.4 1.1,14.1 1.1,4.5"/><path d="M1.1,4.5L10.5,8.2L19.7,4.5M10.5,8.2L10.5,19.4"/></g></svg></div>
<div class="vb" style="left:284px;top:4px"><svg class="ic" style="left:2px;top:2px;width:20px;height:20px" viewBox="0 0 20 20" ><polygon points="10.5,1.1 19.7,4.5 10.5,8.2 1.1,4.5" fill="#60e040"/><polygon points="1.1,4.5 10.5,8.2 10.5,19.4 1.1,14.1" fill="#38c820"/><polygon points="10.5,8.2 19.7,4.5 19.7,14.1 10.5,19.4" fill="#1c9810"/><polygon points="10.5,1.1 19.7,4.5 19.7,14.1 10.5,19.4 1.1,14.1 1.1,4.5" fill="none" stroke="#108010" stroke-width=".8"/></svg></div>
<div class="vb" style="left:4px;top:32px"><svg class="ic" style="left:2px;top:2px;width:20px;height:20px" viewBox="0 0 20 20" ><path d="M5,4.0v12.0a5.0,2.0 0 0 0 10,0v-12.0" fill="none" stroke="#222" stroke-width="1"/><ellipse cx="10.0" cy="4.0" rx="5.0" ry="2.0" fill="none" stroke="#222" stroke-width="1"/><path d="M5,16a5,2 0 0 1 10,0" fill="none" stroke="#222" stroke-width=".8"/></svg></div>
<div class="vb" style="left:4px;top:60px"><svg class="ic" style="left:2px;top:2px;width:20px;height:20px" viewBox="0 0 20 20" ><path d="M5,4.0v12.0a5.0,2.0 0 0 0 10,0v-12.0" fill="none" stroke="#222" stroke-width="1"/><ellipse cx="10.0" cy="4.0" rx="5.0" ry="2.0" fill="none" stroke="#222" stroke-width="1"/></svg></div>
<div class="vb" style="left:4px;top:88px;background:#8f8a84;box-shadow:inset 0 0 0 1.500px #e8c860"><svg class="ic" style="left:2px;top:2px;width:20px;height:20px" viewBox="0 0 20 20" ><path d="M5,4.0v12.0a5.0,2.0 0 0 0 10,0v-12.0" fill="url(#gB)" stroke="#1c3070" stroke-width="0.9"/><ellipse cx="10.0" cy="4.0" rx="5.0" ry="2.0" fill="#88a8e8" stroke="#1c3070" stroke-width="0.9"/></svg></div>
<div class="vb" style="left:4px;top:116px"><svg class="ic" style="left:2px;top:2px;width:20px;height:20px" viewBox="0 0 20 20" ><path d="M5,4.0v12.0a5.0,2.0 0 0 0 10,0v-12.0" fill="url(#gW)" stroke="#555" stroke-width="0.9"/><ellipse cx="10.0" cy="4.0" rx="5.0" ry="2.0" fill="#f0f4fc" stroke="#555" stroke-width="0.9"/></svg></div>
<div class="vb" style="left:4px;top:144px"><svg class="ic" style="left:2px;top:2px;width:20px;height:20px" viewBox="0 0 20 20" ><path d="M5.5,3.8v12.4a4.5,1.8 0 0 0 9,0v-12.4" fill="#8a8c9c" stroke="#222" stroke-width="1"/><ellipse cx="10.0" cy="3.8" rx="4.5" ry="1.8" fill="#8a8c9c" stroke="#222" stroke-width="1"/><path d="M7,5l2,12M10,5l-2,12M12,5l-1,12M13,5l1,11M7,9l6,5M13,9l-6,5" stroke="#222" stroke-width=".7" fill="none"/></svg></div>
</div>
<div id="st" class="abs">
<div class="abs" style="left:2px;top:19px;width:1918px;height:1px;background:#a0a2aa"></div>
<div class="abs" style="left:1336px;top:2px;width:4px;height:16px;background-image:linear-gradient(45deg,#a2a6b6 25%,transparent 25%,transparent 75%,#a2a6b6 75%),linear-gradient(45deg,#a2a6b6 25%,transparent 25%,transparent 75%,#a2a6b6 75%);background-size:2px 2px;background-position:0 0,1px 1px"></div>
<div class="abs" style="left:1341px;top:2px;width:131px;height:17px;background:#fff"></div>
<svg class="abs" style="left:1460px;top:4px" width="12" height="12" viewBox="0 0 12 12"><circle cx="6" cy="7" r="4" fill="none" stroke="#3a78d8" stroke-width="1.200"/></svg>
<div class="abs" style="left:1476px;top:2px;width:4px;height:16px;background-image:linear-gradient(45deg,#a2a6b6 25%,transparent 25%,transparent 75%,#a2a6b6 75%),linear-gradient(45deg,#a2a6b6 25%,transparent 25%,transparent 75%,#a2a6b6 75%);background-size:2px 2px;background-position:0 0,1px 1px"></div>
<span style="left:1486px;top:3px">绝对 XY 上视图</span>
<div class="abs" style="left:1592px;top:3px;width:1px;height:14px;background:#9a9eb0"></div>
<span style="left:1601px;top:3px;font-size:12px">绝对视图</span>
<div class="abs" style="left:1657px;top:2px;width:4px;height:16px;background-image:linear-gradient(45deg,#a2a6b6 25%,transparent 25%,transparent 75%,#a2a6b6 75%),linear-gradient(45deg,#a2a6b6 25%,transparent 25%,transparent 75%,#a2a6b6 75%);background-size:2px 2px;background-position:0 0,1px 1px"></div>
<span style="left:1668px;top:3px;font-weight:bold;font-size:12px">LAYER0</span>
<div class="abs" style="left:1726px;top:3px;width:1px;height:14px;background:#9a9eb0"></div>
<div class="abs" style="left:1757px;top:3px;width:1px;height:14px;background:#9a9eb0"></div>
<div class="abs" style="left:1800px;top:3px;width:1px;height:14px;background:#9a9eb0"></div>
<div class="abs" style="left:1843px;top:3px;width:1px;height:14px;background:#9a9eb0"></div>
<div class="abs" style="left:1887px;top:3px;width:1px;height:14px;background:#9a9eb0"></div>
<div class="abs" style="left:1762px;top:4px;width:32px;height:12px;background:#48638f"></div>
<div class="abs" style="left:1805px;top:4px;width:32px;height:12px;background:#48638f"></div>
<div class="abs" style="left:1848px;top:4px;width:32px;height:12px;background:#48638f"></div>
<svg class="ic" style="left:1892px;top:1.5px;width:16px;height:16px" viewBox="0 0 20 20" ><circle cx="10" cy="10" r="8" fill="#1840c0" stroke="#0c2070" stroke-width=".8"/><path d="M5,5c3,-2 5,0 4,2c-1,2 -4,2 -4,5c-2,-2 -2,-5 0,-7zM11,9c3,-1 5,1 5,3c-1,3 -3,4 -4,3c0,-2 -2,-3 -1,-6zM12,3c2,0 4,2 4,3c-2,0 -3,-1 -4,-3z" fill="#30c030"/><circle cx="7.500" cy="6.500" r="2" fill="#fff" opacity=".35"/></svg>
<div class="abs" style="left:1132px;top:22px;width:1px;height:15px;background:#9a9eb0"></div>
<div class="abs" style="left:1175px;top:22px;width:1px;height:15px;background:#9a9eb0"></div>
<div class="abs" style="left:1206px;top:22px;width:1px;height:15px;background:#9a9eb0"></div>
<div class="abs" style="left:1237px;top:22px;width:1px;height:15px;background:#9a9eb0"></div>
<div class="abs" style="left:1268px;top:22px;width:1px;height:15px;background:#9a9eb0"></div>
<div class="abs" style="left:1299px;top:22px;width:1px;height:15px;background:#9a9eb0"></div>
<div class="abs" style="left:1330px;top:22px;width:1px;height:15px;background:#9a9eb0"></div>
<div class="abs" style="left:1361px;top:22px;width:1px;height:15px;background:#9a9eb0"></div>
<div class="abs" style="left:1392px;top:22px;width:1px;height:15px;background:#9a9eb0"></div>
<div class="abs" style="left:1423px;top:22px;width:1px;height:15px;background:#9a9eb0"></div>
<div class="abs" style="left:1454px;top:22px;width:1px;height:15px;background:#9a9eb0"></div>
<div class="abs" style="left:1580px;top:22px;width:1px;height:15px;background:#9a9eb0"></div>
<div class="abs" style="left:1654px;top:22px;width:1px;height:15px;background:#9a9eb0"></div>
<span style="left:1141px;top:22px">拴牢</span>
<svg class="ic" style="left:1182px;top:21px;width:17px;height:17px" viewBox="0 0 20 20" ><rect x="1" y="1" width="18" height="18" fill="#b8bcd0" stroke="#585c70" stroke-width="1.400"/><path d="M4,9C4.500,4 11,3 13.500,6l1.500,-1.500v5.500h-5.500l2,-2C10,6.500 7,7 6.500,9.500z" fill="#f09098" stroke="#d04858" stroke-width=".6"/><path d="M16,11C15.500,16 9,17 6.500,14l-1.500,1.500v-5.500h5.500l-2,2C10,13.500 13,13 13.500,10.500z" fill="#e8b0c0" stroke="#d04858" stroke-width=".6"/></svg>
<div class="abs" style="left:1212px;top:20px;width:18px;height:19px;background:#fbdc74"></div><svg class="ic" style="left:1212.5px;top:21px;width:17px;height:17px" viewBox="0 0 20 20" ><path d="M1,1l6,3l3,-4l1,5l6,0l-4,4l3,6l-6,-3l-5,4l1,-6l-6,-3l6,-1z" fill="#c060d8"/><circle cx="7" cy="5" r="2.500" fill="#f8e850"/><path d="M8,7l1,10l2.500,-2.500l4,5l2,-1.500l-4,-5l3.500,-1z" fill="#e8e0d0" stroke="#6a6a5a" stroke-width=".7"/></svg>
<svg class="ic" style="left:1245px;top:21px;width:17px;height:17px" viewBox="0 0 20 20" ><rect x="2.500" y="8" width="10" height="10.500" fill="#d8e4f8" stroke="#5a78b8" stroke-width=".9"/><path d="M4.500,11h6M4.500,14.500h6M6,9.500v8M9.500,9.500v8" stroke="#3a68d0" stroke-width="1.200" stroke-dasharray="1.500 1.500"/><path d="M4,8l6,-6c3,-1.500 6,-1 8,0v4l-3.500,2.500h-3.500l1,-2l-5,3z" fill="#e8c088" stroke="#8a6020" stroke-width=".6"/><path d="M7,5l4,3M9,3.500l3,3" stroke="#a87838" stroke-width=".5"/></svg>
<svg class="ic" style="left:1275px;top:20.5px;width:18px;height:18px" viewBox="0 0 20 20" ><ellipse cx="10" cy="18" rx="5" ry="1.500" fill="#555" opacity=".5"/><text x="10" y="16" font-size="19" font-weight="bold" text-anchor="middle" fill="#4a80d8" stroke="#2a58a8" stroke-width=".4" font-family="Liberation Sans,sans-serif">?</text></svg>
<svg class="ic" style="left:1305px;top:21px;width:18px;height:18px" viewBox="0 0 20 20" ><g transform="translate(3,0) scale(0.78)" stroke="#1c3c90" stroke-width=".5" stroke-linejoin="round"><path d="M0,3l6,-3l6,3l-6,3z" fill="#78a8f0"/><path d="M0,3l6,3v7l-6,-3z" fill="#4a80e0"/><path d="M12,3l-6,3v7l6,-3z" fill="#2858c0"/></g><g transform="translate(9.5,7.5) scale(0.78)" stroke="#111" stroke-width=".5" stroke-linejoin="round"><path d="M0,3l6,-3l6,3l-6,3z" fill="#88b0b8"/><path d="M0,3l6,3v7l-6,-3z" fill="#5a8890"/><path d="M12,3l-6,3v7l6,-3z" fill="#3a6068"/></g><path d="M1,12.500l8,2M1,17l8,-2M2,9.500l7,5" stroke="#f01020" stroke-width="1.500"/></svg>
<div class="abs" style="left:1336px;top:20px;width:18px;height:19px;background:#fbdc74"></div><svg class="ic" style="left:1336.5px;top:21px;width:17px;height:17px" viewBox="0 0 20 20" ><rect x="0" y="0" width="20" height="20" fill="#fbdc74"/><path d="M2.500,6l7.500,-3.500l7.500,3.500l-7.500,3z" fill="#e020f0"/><path d="M2.500,6l7.500,3v9l-7.500,-3.500z" fill="#88a090"/><path d="M17.500,6l-7.500,3v9l7.500,-3.500z" fill="#90a898"/><path d="M2.500,6l7.500,3l7.500,-3M10,9v9M2.500,6v8.500l7.500,3.500l7.500,-3.500v-8.500" fill="none" stroke="#2858e0" stroke-width="1.300"/></svg>
<div class="abs" style="left:1371px;top:24px;width:10px;height:13px;border:1.500px solid #6a7a6a;background:#d0d4e0"></div>
<div class="abs" style="left:1399px;top:20px;width:17px;height:17px;border:2px solid #2c8a2c;border-radius:50%"></div>
<div class="abs" style="left:1430px;top:24px;width:16px;height:13px;border:1.500px solid #6a6a7a;border-top:none"></div><div class="abs" style="left:1438px;top:24px;width:1px;height:13px;background:#6a6a7a"></div>
<span style="left:1464px;top:22px;font-size:13px">LS: 1.00 PS: 1.00</span>
<span style="left:1589px;top:22px;font-size:12.200px">单位: 毫米</span>
<span style="left:1663px;top:22px;font-size:12.95px">X = 0522.805 Y = 1188.476 Z = 0000.000</span>
</div>
<div class="abs" style="left:1361px;top:1009px;width:205px;height:24px;background:#fff;border:1px solid #d4d4d8;border-radius:3px;box-shadow:0 0 2px rgba(0,0,0,.15)"></div>
<svg class="abs" style="left:1356px;top:1003px" width="34" height="34" viewBox="0 0 34 34"><rect x="5" y="5" width="24" height="24" rx="4.500" fill="#f2531f" transform="rotate(-12 17 17)"/><text x="17" y="27" font-size="26" font-weight="bold" font-style="italic" text-anchor="middle" fill="#fff" font-family="Liberation Sans,sans-serif" transform="rotate(-8 17 17)">S</text></svg>
<span class="abs" style="left:1392.500px;top:1011px;font-size:15.500px;line-height:20px;font-weight:bold;color:#1f7ad4;font-family:'Liberation Sans','Noto Sans CJK SC',sans-serif">中</span>
<svg class="abs" style="left:1414px;top:1012px" width="16" height="18" viewBox="0 0 16 18"><circle cx="4" cy="5.500" r="1.600" fill="none" stroke="#1f7ad4" stroke-width="1.300"/><path d="M10.500,9.500a1.700,1.700 0 1 1 2,1.800c0,1.500 -1,2.700 -2.300,3.200c.8,-.8 1.200,-1.800 1,-2.900c-.5,-.4 -.8,-1 -.7,-2.100z" fill="#1f7ad4"/></svg>
<svg class="abs" style="left:1435px;top:1011.500px" width="18" height="18" viewBox="0 0 18 18"><circle cx="9" cy="9" r="7.300" fill="none" stroke="#1f7ad4" stroke-width="1.500"/><path d="M6.500,5.500v2.500M11.500,5.500v2.500" stroke="#1f7ad4" stroke-width="1.600" stroke-linecap="round"/><path d="M5,10.500c1.500,3.500 6.500,3.500 8,0" fill="none" stroke="#1f7ad4" stroke-width="1.500" stroke-linecap="round"/></svg>
<svg class="abs" style="left:1458px;top:1011.500px" width="16" height="19" viewBox="0 0 16 19"><rect x="5" y="1" width="6" height="10.500" rx="3" fill="#1f7ad4"/><path d="M2.500,8.500c0,7 11,7 11,0" fill="none" stroke="#1f7ad4" stroke-width="1.500"/><path d="M8,14v3M4.500,17.500h7" stroke="#1f7ad4" stroke-width="1.500"/></svg>
<svg class="abs" style="left:1480px;top:1014.500px" width="17" height="13" viewBox="0 0 17 13"><rect x=".5" y=".5" width="16" height="12" rx="1.500" fill="#1f7ad4"/><path d="M2.500,3.500h12M2.500,6.200h12" stroke="#fff" stroke-width="1.400" stroke-dasharray="1.600 1"/><path d="M4.500,9.500h8" stroke="#fff" stroke-width="1.500"/></svg>
<svg class="abs" style="left:1503px;top:1013px" width="18" height="17" viewBox="0 0 18 17"><circle cx="7.500" cy="4" r="3.300" fill="#b4c2d6"/><path d="M1,14c0,-7 13,-7 13,0z" fill="#b4c2d6"/><circle cx="12.500" cy="12" r="4" fill="#c4cedc"/><text x="12.500" y="15" font-size="7.500" font-weight="bold" font-style="italic" text-anchor="middle" fill="#fff" font-family="Liberation Sans,sans-serif">7</text></svg>
<svg class="abs" style="left:1524px;top:1013.500px" width="16" height="14" viewBox="0 0 16 14"><path d="M5,0c1,1.800 5,1.800 6,0l5,2.500l-1.800,3.800l-2,-.8v8.500h-8.400v-8.500l-2,.8l-1.800,-3.800z" fill="#1f7ad4"/></svg>
<svg class="abs" style="left:1547px;top:1015px" width="14" height="14" viewBox="0 0 14 14"><rect x="0" y="0" width="6" height="6" fill="#1f7ad4"/><rect x="7.800" y=".6" width="5" height="5" fill="none" stroke="#1f7ad4" stroke-width="1.300"/><rect x="0" y="7.500" width="6" height="6" fill="#1f7ad4"/><rect x="7.500" y="7.500" width="6" height="6" fill="#1f7ad4"/></svg>
<div id="task" class="abs"><div class="abs" style="left:48px;top:0;width:344px;height:8px;background:#f1f1f1"></div><div class="abs" style="left:590px;top:0;width:44px;height:8px;background:#3c3c3c"></div><span class="abs" style="left:1815px;top:5px;color:#fff;font-size:12px;line-height:12px">15:58</span><div class="abs" style="left:1915px;top:0;width:1px;height:8px;background:#8a8a8a"></div></div>

</body></html>
